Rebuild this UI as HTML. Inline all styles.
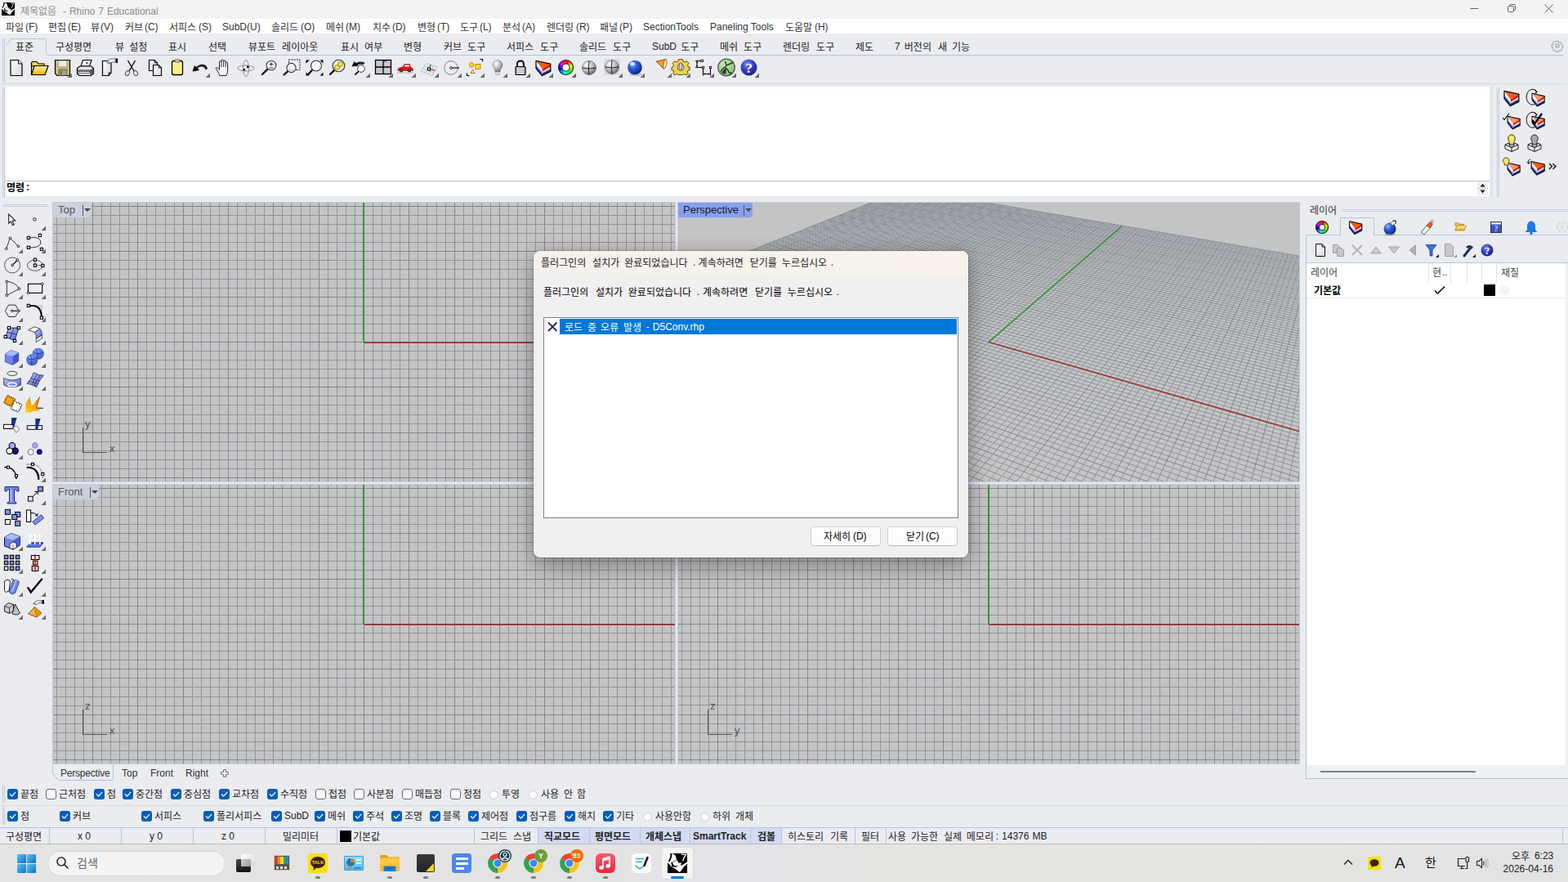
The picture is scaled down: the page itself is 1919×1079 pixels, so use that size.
<!DOCTYPE html>
<html lang="ko"><head><meta charset="utf-8"><title>Rhino 7</title><style>
html,body{margin:0;padding:0;overflow:hidden}
body{width:1919px;height:1079px;position:relative;overflow:hidden;background:#ebecf0;font-family:"Liberation Sans","Noto Sans CJK KR",sans-serif;font-size:12px;}
.t{position:absolute;white-space:nowrap;line-height:15px;font-size:12px;font-family:"Liberation Sans","Noto Sans CJK KR",sans-serif}
.a{position:absolute}
svg{display:block;overflow:visible}
</style></head>
<body>
<!-- chrome -->
<div style="position:absolute;left:0;top:0;width:1919px;height:23px;background:#f3f3f3"></div>
<svg style="position:absolute;left:2px;top:3px;overflow:hidden" width="16" height="16" viewBox="0 0 24 24"><rect width="24" height="24" rx=".6" fill="#000"/><path d="M0 0L7 .6L9.600 2.500L11 7.600L13.200 11L15.200 12L17.600 10.800L16.400 13L15.800 14.700L18 14.200L24 10.600V12.400L20 16.500L17.700 19.500L16.600 21.500L14.500 23L12 21L9 18.500L5.500 17L4 15.500L2 13L0 11.500Z" fill="#fff"/><path d="M4.300 .3Q4.800 3.500 3.400 6.500T1.700 9.400" fill="none" stroke="#000" stroke-width="1.900" stroke-linecap="round"/><path d="M4.600 11.800L11 8" fill="none" stroke="#000" stroke-width=".6"/><path d="M4.300 11.300L5.900 10.800L6.600 13L9.500 15.800L12.900 14L10.200 17.300L8 16.300L5.600 16.900Z" fill="#000"/><path d="M16.800 1.400H22.600Q19.500 5 18.700 9.500" fill="none" stroke="#fff" stroke-width="1.300"/></svg>
<svg style="position:absolute;left:25px;top:5.7px" width="169" height="15" fill="#8c8c8c" font-family="Liberation Sans, Noto Sans CJK KR, sans-serif" font-size="12" font-weight="normal"><text x="0.00" y="11.66">제목없음</text><text x="51.91" y="11.66">-</text><text x="59.90" y="11.66">Rhino</text><text x="95.25" y="11.66">7</text><text x="105.92" y="11.66">Educational</text></svg>
<svg style="position:absolute;left:1790px;top:0" width="129" height="23" viewBox="0 0 129 23" fill="none" stroke="#666" stroke-width="1"><path d="M9.5 10.5H19.5"/><rect x="55.500" y="7.500" width="7" height="7" rx="1.500"/><path d="M57.500 7.500V6.800Q57.500 5.500 58.800 5.500H63.200Q64.500 5.500 64.500 6.800V11.200Q64.500 12.500 63.200 12.500H62.500"/><path d="M100.500 5.500L110.500 15.500M110.500 5.500L100.500 15.500"/></svg>
<div style="position:absolute;left:0;top:23px;width:1919px;height:18px;background:#fff"></div>
<svg style="position:absolute;left:7px;top:26px" width="40" height="15" fill="#333" font-family="Liberation Sans, Noto Sans CJK KR, sans-serif" font-size="12" font-weight="normal"><text x="0.00" y="11.66">파일</text><text x="23.96" y="10.660">(F)</text></svg>
<svg style="position:absolute;left:59px;top:26px" width="40" height="15" fill="#333" font-family="Liberation Sans, Noto Sans CJK KR, sans-serif" font-size="12" font-weight="normal"><text x="0.00" y="11.66">편집</text><text x="23.96" y="10.660">(E)</text></svg>
<svg style="position:absolute;left:111px;top:26px" width="28" height="15" fill="#333" font-family="Liberation Sans, Noto Sans CJK KR, sans-serif" font-size="12" font-weight="normal"><text x="0.00" y="11.66">뷰</text><text x="11.98" y="10.660">(V)</text></svg>
<svg style="position:absolute;left:153px;top:26px" width="41" height="15" fill="#333" font-family="Liberation Sans, Noto Sans CJK KR, sans-serif" font-size="12" font-weight="normal"><text x="0.00" y="11.66">커브</text><text x="23.96" y="10.660">(C)</text></svg>
<svg style="position:absolute;left:207px;top:26px" width="52" height="15" fill="#333" font-family="Liberation Sans, Noto Sans CJK KR, sans-serif" font-size="12" font-weight="normal"><text x="0.00" y="11.66">서피스</text><text x="35.94" y="10.660">(S)</text></svg>
<div class="t" style="left:272px;top:26px;color:#333;">SubD(U)</div>
<svg style="position:absolute;left:332px;top:26px" width="54" height="15" fill="#333" font-family="Liberation Sans, Noto Sans CJK KR, sans-serif" font-size="12" font-weight="normal"><text x="0.00" y="11.66">솔리드</text><text x="35.94" y="10.660">(O)</text></svg>
<svg style="position:absolute;left:399px;top:26px" width="42" height="15" fill="#333" font-family="Liberation Sans, Noto Sans CJK KR, sans-serif" font-size="12" font-weight="normal"><text x="0.00" y="11.66">메쉬</text><text x="23.96" y="10.660">(M)</text></svg>
<svg style="position:absolute;left:456px;top:26px" width="41" height="15" fill="#333" font-family="Liberation Sans, Noto Sans CJK KR, sans-serif" font-size="12" font-weight="normal"><text x="0.00" y="11.66">치수</text><text x="23.96" y="10.660">(D)</text></svg>
<svg style="position:absolute;left:511px;top:26px" width="40" height="15" fill="#333" font-family="Liberation Sans, Noto Sans CJK KR, sans-serif" font-size="12" font-weight="normal"><text x="0.00" y="11.66">변형</text><text x="23.96" y="10.660">(T)</text></svg>
<svg style="position:absolute;left:563px;top:26px" width="39" height="15" fill="#333" font-family="Liberation Sans, Noto Sans CJK KR, sans-serif" font-size="12" font-weight="normal"><text x="0.00" y="11.66">도구</text><text x="23.96" y="10.660">(L)</text></svg>
<svg style="position:absolute;left:615px;top:26px" width="40" height="15" fill="#333" font-family="Liberation Sans, Noto Sans CJK KR, sans-serif" font-size="12" font-weight="normal"><text x="0.00" y="11.66">분석</text><text x="23.96" y="10.660">(A)</text></svg>
<svg style="position:absolute;left:669px;top:26px" width="53" height="15" fill="#333" font-family="Liberation Sans, Noto Sans CJK KR, sans-serif" font-size="12" font-weight="normal"><text x="0.00" y="11.66">렌더링</text><text x="35.94" y="10.660">(R)</text></svg>
<svg style="position:absolute;left:734px;top:26px" width="40" height="15" fill="#333" font-family="Liberation Sans, Noto Sans CJK KR, sans-serif" font-size="12" font-weight="normal"><text x="0.00" y="11.66">패널</text><text x="23.96" y="10.660">(P)</text></svg>
<div class="t" style="left:787px;top:26px;color:#333;">SectionTools</div>
<div class="t" style="left:869px;top:26px;color:#333;">Paneling Tools</div>
<svg style="position:absolute;left:961px;top:26px" width="53" height="15" fill="#333" font-family="Liberation Sans, Noto Sans CJK KR, sans-serif" font-size="12" font-weight="normal"><text x="0.00" y="11.66">도움말</text><text x="35.94" y="10.660">(H)</text></svg>
<div style="position:absolute;left:3px;top:47px;width:1px;height:54px;background:#c3cae0"></div><div style="position:absolute;left:5px;top:47px;width:1px;height:54px;background:#c3cae0"></div>
<svg style="position:absolute;left:0;top:44px" width="1919" height="26" viewBox="0 44 1919 26" fill="none" stroke="#b7c2dd" stroke-width="1"><path d="M7.500 55.500L13.500 47.500H53.500Q56.500 47.500 56.500 50.500V65.500Q56.500 67.500 58.500 67.500H1914"/></svg>
<svg style="position:absolute;left:19px;top:50px" width="24" height="15" fill="#222" font-family="Liberation Sans, Noto Sans CJK KR, sans-serif" font-size="12" font-weight="normal"><text x="0.00" y="11.66">표준</text></svg>
<svg style="position:absolute;left:68px;top:50px" width="48" height="15" fill="#222" font-family="Liberation Sans, Noto Sans CJK KR, sans-serif" font-size="12" font-weight="normal"><text x="0.00" y="11.66">구성평면</text></svg>
<svg style="position:absolute;left:141px;top:50px" width="42" height="15" fill="#222" font-family="Liberation Sans, Noto Sans CJK KR, sans-serif" font-size="12" font-weight="normal"><text x="0.00" y="11.66">뷰</text><text x="17.14" y="11.66">설정</text></svg>
<svg style="position:absolute;left:206px;top:50px" width="24" height="15" fill="#222" font-family="Liberation Sans, Noto Sans CJK KR, sans-serif" font-size="12" font-weight="normal"><text x="0.00" y="11.66">표시</text></svg>
<svg style="position:absolute;left:255px;top:50px" width="24" height="15" fill="#222" font-family="Liberation Sans, Noto Sans CJK KR, sans-serif" font-size="12" font-weight="normal"><text x="0.00" y="11.66">선택</text></svg>
<svg style="position:absolute;left:304px;top:50px" width="90" height="15" fill="#222" font-family="Liberation Sans, Noto Sans CJK KR, sans-serif" font-size="12" font-weight="normal"><text x="0.00" y="11.66">뷰포트</text><text x="41.10" y="11.66">레이아웃</text></svg>
<svg style="position:absolute;left:417px;top:50px" width="54" height="15" fill="#222" font-family="Liberation Sans, Noto Sans CJK KR, sans-serif" font-size="12" font-weight="normal"><text x="0.00" y="11.66">표시</text><text x="29.12" y="11.66">여부</text></svg>
<svg style="position:absolute;left:494px;top:50px" width="24" height="15" fill="#222" font-family="Liberation Sans, Noto Sans CJK KR, sans-serif" font-size="12" font-weight="normal"><text x="0.00" y="11.66">변형</text></svg>
<svg style="position:absolute;left:543px;top:50px" width="54" height="15" fill="#222" font-family="Liberation Sans, Noto Sans CJK KR, sans-serif" font-size="12" font-weight="normal"><text x="0.00" y="11.66">커브</text><text x="29.12" y="11.66">도구</text></svg>
<svg style="position:absolute;left:620px;top:50px" width="66" height="15" fill="#222" font-family="Liberation Sans, Noto Sans CJK KR, sans-serif" font-size="12" font-weight="normal"><text x="0.00" y="11.66">서피스</text><text x="41.10" y="11.66">도구</text></svg>
<svg style="position:absolute;left:709px;top:50px" width="66" height="15" fill="#222" font-family="Liberation Sans, Noto Sans CJK KR, sans-serif" font-size="12" font-weight="normal"><text x="0.00" y="11.66">솔리드</text><text x="41.10" y="11.66">도구</text></svg>
<svg style="position:absolute;left:798px;top:50px" width="60" height="15" fill="#222" font-family="Liberation Sans, Noto Sans CJK KR, sans-serif" font-size="12" font-weight="normal"><text x="0.00" y="10.660">SubD</text><text x="35.18" y="11.66">도구</text></svg>
<svg style="position:absolute;left:881px;top:50px" width="54" height="15" fill="#222" font-family="Liberation Sans, Noto Sans CJK KR, sans-serif" font-size="12" font-weight="normal"><text x="0.00" y="11.66">메쉬</text><text x="29.12" y="11.66">도구</text></svg>
<svg style="position:absolute;left:958px;top:50px" width="66" height="15" fill="#222" font-family="Liberation Sans, Noto Sans CJK KR, sans-serif" font-size="12" font-weight="normal"><text x="0.00" y="11.66">렌더링</text><text x="41.10" y="11.66">도구</text></svg>
<svg style="position:absolute;left:1047px;top:50px" width="24" height="15" fill="#222" font-family="Liberation Sans, Noto Sans CJK KR, sans-serif" font-size="12" font-weight="normal"><text x="0.00" y="11.66">제도</text></svg>
<svg style="position:absolute;left:1095px;top:50px" width="95" height="15" fill="#222" font-family="Liberation Sans, Noto Sans CJK KR, sans-serif" font-size="12" font-weight="normal"><text x="0.00" y="10.660">7</text><text x="11.83" y="11.66">버전의</text><text x="52.93" y="11.66">새</text><text x="70.07" y="11.66">기능</text></svg>
<svg style="position:absolute;left:1898px;top:48px" width="16" height="16" viewBox="0 0 16 16" fill="none" stroke="#8a8f99" stroke-width="1"><circle cx="8" cy="8" r="2.200"/><path d="M6.800 1.500h2.400l.4 1.800 1.300.6 1.600-1 1.700 1.700-1 1.600.6 1.300 1.800.4v2.400l-1.800.4-.6 1.300 1 1.600-1.700 1.700-1.600-1-1.300.6-.4 1.800H6.800l-.4-1.800-1.300-.6-1.600 1-1.700-1.700 1-1.600-.6-1.300-1.800-.4V6.800l1.800-.4.6-1.300-1-1.600 1.700-1.700 1.600 1 1.300-.6z" transform="translate(0.800 0.800) scale(0.900)"/></svg>
<div style="position:absolute;left:1px;top:102px;width:1917px;height:1px;background:#d3d8e8"></div>
<div style="position:absolute;left:3px;top:107px;width:1px;height:135px;background:#c3cae0"></div><div style="position:absolute;left:5px;top:107px;width:1px;height:135px;background:#c3cae0"></div>
<div style="position:absolute;left:7px;top:106px;width:1816px;height:134px;background:#fff"></div>
<div style="position:absolute;left:7px;top:221px;width:1816px;height:1px;background:#b9c1d6"></div>
<svg style="position:absolute;left:8px;top:222px" width="28" height="15" fill="#000" font-family="Liberation Sans, Noto Sans CJK KR, sans-serif" font-size="12" font-weight="bold"><text x="0.00" y="11.66">명령</text><text x="23.96" y="10.660">:</text></svg>
<div style="position:absolute;left:1808px;top:222px;width:13px;height:17px;background:#f0f0f0;border:0"></div>
<svg style="position:absolute;left:1808px;top:222px" width="13" height="17" viewBox="0 0 13 17"><path d="M3.500 6.500L6.500 2.800L9.500 6.500Z M3.500 10.500L6.500 14.200L9.500 10.500Z" fill="#111"/><path d="M0 8.500H13" stroke="#d0d0d0"/></svg>
<div style="position:absolute;left:1825px;top:105px;width:1px;height:137px;background:#d3d8e8"></div>
<div style="position:absolute;left:1832px;top:107px;width:1px;height:134px;background:#c3cae0"></div><div style="position:absolute;left:1834px;top:107px;width:1px;height:134px;background:#c3cae0"></div>
<svg style="position:absolute;left:1895px;top:199px" width="10" height="9" viewBox="0 0 10 9" fill="none" stroke="#111" stroke-width="1.300"><path d="M1 1L4.500 4.500L1 8M5.500 1L9 4.500L5.500 8"/></svg>
<div style="position:absolute;left:3px;top:250px;width:55px;height:1px;background:#c3cae0"></div><div style="position:absolute;left:3px;top:252px;width:55px;height:1px;background:#c3cae0"></div>
<!-- viewports -->
<div style="position:absolute;left:64px;top:247px;width:763px;height:343px;background:#c3cae0"></div>
<div style="position:absolute;left:829px;top:247px;width:762px;height:343px;background:#c3cae0"></div>
<div style="position:absolute;left:64px;top:592px;width:763px;height:343px;background:#c3cae0"></div>
<div style="position:absolute;left:829px;top:592px;width:762px;height:343px;background:#c3cae0"></div>
<svg style="position:absolute;left:65px;top:248px;overflow:hidden" width="761" height="341" viewBox="65 248 761 341" shape-rendering="crispEdges">
<rect x="65" y="248" width="761" height="341" fill="#c4c4c4"/>
<path d="M69.500 248V589M80.500 248V589M91.500 248V589M102.500 248V589M124.500 248V589M135.500 248V589M146.500 248V589M157.500 248V589M179.500 248V589M190.500 248V589M202.500 248V589M213.500 248V589M235.500 248V589M246.500 248V589M257.500 248V589M268.500 248V589M290.500 248V589M301.500 248V589M312.500 248V589M323.500 248V589M345.500 248V589M356.500 248V589M368.500 248V589M379.500 248V589M401.500 248V589M412.500 248V589M423.500 248V589M434.500 248V589M456.500 248V589M467.500 248V589M478.500 248V589M489.500 248V589M511.500 248V589M522.500 248V589M534.500 248V589M545.500 248V589M567.500 248V589M578.500 248V589M589.500 248V589M600.500 248V589M622.500 248V589M633.500 248V589M644.500 248V589M655.500 248V589M677.500 248V589M688.500 248V589M700.500 248V589M711.500 248V589M733.500 248V589M744.500 248V589M755.500 248V589M766.500 248V589M788.500 248V589M799.500 248V589M810.500 248V589M821.500 248V589M65 263.500H826M65 274.500H826M65 285.500H826M65 296.500H826M65 318.500H826M65 329.500H826M65 341.500H826M65 352.500H826M65 374.500H826M65 385.500H826M65 396.500H826M65 407.500H826M65 429.500H826M65 440.500H826M65 451.500H826M65 462.500H826M65 484.500H826M65 495.500H826M65 507.500H826M65 518.500H826M65 540.500H826M65 551.500H826M65 562.500H826M65 573.500H826" stroke="#8f959d" stroke-width="1" fill="none"/>
<path d="M113.500 248V589M168.500 248V589M224.500 248V589M279.500 248V589M334.500 248V589M390.500 248V589M445.500 248V589M500.500 248V589M556.500 248V589M611.500 248V589M666.500 248V589M722.500 248V589M777.500 248V589M65 252.500H826M65 307.500H826M65 363.500H826M65 418.500H826M65 473.500H826M65 529.500H826M65 584.500H826" stroke="#82878f" stroke-width="1" fill="none"/>
<rect x="444" y="248" width="2" height="171" fill="#3d923d"/>
<rect x="446" y="418" width="380" height="2" fill="#943b3b"/>
</svg>
<svg style="position:absolute;left:830px;top:248px;overflow:hidden" width="760" height="341" viewBox="830 248 760 341">
<rect x="830" y="248" width="760" height="341" fill="#c4c4c4"/>
<path d="M347.700 538.600L1111.700 231.600M357.0 530.700L2135.600 2081.400M351.0 541.500L1114.900 232.100M369.200 525.800L2120.100 2008.500M354.300 544.400L1118.100 232.700M381.300 521.0L2105.600 1940.500M357.600 547.400L1121.300 233.200M393.100 516.300L2092.100 1877.100M364.400 553.500L1127.800 234.300M416.100 507.100L2067.500 1761.700M367.900 556.600L1131.100 234.900M427.300 502.600L2056.400 1709.200M371.300 559.800L1134.400 235.400M438.300 498.300L2045.800 1659.800M374.900 562.900L1137.700 236.0M449.100 493.900L2035.900 1613.100M382.0 569.400L1144.300 237.100M470.200 485.500L2017.600 1527.200M385.700 572.600L1147.600 237.700M480.500 481.400L2009.200 1487.600M389.400 576.0L1151.0 238.300M490.600 477.400L2001.200 1449.900M393.100 579.300L1154.400 238.900M500.500 473.500L1993.600 1414.200M400.700 586.100L1161.200 240.0M519.900 465.700L1979.400 1347.700M404.600 589.600L1164.600 240.600M529.400 462.0L1972.800 1316.700M408.500 593.100L1168.0 241.200M538.700 458.200L1966.500 1287.200M412.400 596.700L1171.500 241.800M547.800 454.600L1960.500 1258.900M420.500 603.900L1178.500 243.0M565.700 447.500L1949.200 1205.900M424.600 607.600L1182.0 243.600M574.400 444.0L1943.900 1181.100M428.700 611.300L1185.500 244.200M583.0 440.600L1938.900 1157.200M432.900 615.100L1189.0 244.800M591.500 437.200L1934.0 1134.300M441.500 622.800L1196.200 246.0M608.100 430.600L1924.800 1091.100M445.900 626.700L1199.800 246.600M616.200 427.300L1920.500 1070.700M450.300 630.700L1203.400 247.200M624.100 424.200L1916.300 1051.100M454.800 634.700L1207.0 247.900M632.0 421.0L1912.200 1032.100M463.900 642.900L1214.300 249.100M647.400 414.900L1904.600 996.200M468.500 647.100L1218.0 249.700M654.900 411.900L1901.0 979.200M473.200 651.300L1221.700 250.400M662.300 409.0L1897.500 962.700M478.0 655.600L1225.400 251.0M669.600 406.0L1894.100 946.800M487.700 664.300L1232.900 252.300M683.900 400.300L1887.600 916.500M492.700 668.800L1236.700 252.900M690.900 397.500L1884.600 902.100M497.700 673.300L1240.500 253.600M697.800 394.800L1881.600 888.100M502.800 677.900L1244.300 254.200M704.600 392.100L1878.700 874.500M513.200 687.300L1252.0 255.500M718.0 386.700L1873.200 848.600M518.600 692.0L1255.900 256.200M724.500 384.100L1870.500 836.200M524.0 696.900L1259.800 256.900M731.0 381.600L1868.0 824.100M529.400 701.800L1263.700 257.500M737.400 379.0L1865.500 812.400M540.600 711.800L1271.600 258.900M749.800 374.100L1860.700 790.0M546.300 716.900L1275.600 259.600M756.0 371.600L1858.400 779.200M552.100 722.100L1279.600 260.300M762.0 369.200L1856.200 768.800M557.900 727.400L1283.600 260.900M768.0 366.800L1854.0 758.600M569.900 738.200L1291.700 262.300M779.700 362.200L1849.900 739.0M576.0 743.700L1295.800 263.0M785.400 359.900L1847.900 729.600M582.300 749.300L1299.900 263.700M791.100 357.600L1845.900 720.400M588.600 754.900L1304.100 264.400M796.700 355.400L1844.0 711.400M601.500 766.500L1312.400 265.900M807.700 351.0L1840.300 694.100M608.100 772.500L1316.600 266.600M813.100 348.800L1838.500 685.800M614.800 778.500L1320.800 267.300M818.400 346.700L1836.800 677.700M621.700 784.600L1325.0 268.0M823.700 344.600L1835.100 669.800M635.600 797.200L1333.600 269.500M834.0 340.500L1831.900 654.400M642.800 803.600L1337.900 270.200M839.100 338.500L1830.300 647.0M650.100 810.200L1342.200 271.0M844.100 336.500L1828.700 639.800M657.400 816.800L1346.600 271.700M849.100 334.500L1827.200 632.700M672.600 830.400L1355.400 273.200M858.800 330.600L1824.300 619.0M680.300 837.400L1359.800 274.0M863.600 328.700L1822.900 612.400M688.200 844.500L1364.300 274.700M868.300 326.800L1821.500 605.900M696.300 851.700L1368.700 275.500M873.0 324.900L1820.200 599.500M712.700 866.500L1377.800 277.0M882.200 321.300L1817.600 587.200M721.200 874.100L1382.300 277.800M886.800 319.500L1816.300 581.200M729.800 881.800L1386.900 278.600M891.200 317.700L1815.0 575.400M738.600 889.700L1391.500 279.400M895.700 315.900L1813.800 569.600M756.500 905.800L1400.800 281.0M904.400 312.400L1811.400 558.500M765.800 914.100L1405.500 281.800M908.700 310.700L1810.300 553.100M775.200 922.600L1410.200 282.600M912.900 309.0L1809.200 547.800M784.800 931.200L1414.900 283.400M917.100 307.400L1808.100 542.600M804.500 948.900L1424.500 285.0M925.300 304.100L1805.900 532.500M814.600 958.0L1429.300 285.800M929.400 302.500L1804.900 527.500M825.0 967.300L1434.200 286.700M933.400 300.900L1803.800 522.700M835.500 976.800L1439.0 287.500M937.400 299.300L1802.800 518.0M857.200 996.300L1448.900 289.200M945.200 296.200L1800.900 508.700M868.400 1006.300L1453.800 290.0M949.100 294.600L1799.900 504.200M879.800 1016.600L1458.800 290.900M952.900 293.100L1799.0 499.800M891.500 1027.0L1463.800 291.700M956.600 291.600L1798.0 495.500M915.500 1048.600L1474.0 293.500M964.100 288.600L1796.200 487.0M927.900 1059.800L1479.100 294.300M967.700 287.200L1795.400 482.900M940.600 1071.100L1484.200 295.200M971.400 285.700L1794.500 478.900M953.500 1082.800L1489.400 296.100M974.900 284.300L1793.600 474.900M980.200 1106.800L1499.800 297.900M982.0 281.500L1792.0 467.100M994.0 1119.200L1505.100 298.800M985.500 280.100L1791.200 463.300M1008.200 1131.900L1510.400 299.700M988.900 278.700L1790.400 459.600M1022.600 1144.800L1515.700 300.600M992.400 277.400L1789.600 455.900M1052.500 1171.700L1526.400 302.400M999.100 274.700L1788.100 448.700M1068.0 1185.600L1531.900 303.400M1002.400 273.400L1787.300 445.200M1083.900 1199.900L1537.300 304.300M1005.700 272.0L1786.600 441.800M1100.100 1214.500L1542.800 305.200M1008.900 270.700L1785.900 438.400M1133.800 1244.800L1553.900 307.100M1015.400 268.200L1784.500 431.700M1151.300 1260.500L1559.500 308.100M1018.500 266.900L1783.800 428.500M1169.300 1276.600L1565.100 309.0M1021.700 265.700L1783.100 425.300M1187.700 1293.100L1570.800 310.0M1024.800 264.400L1782.400 422.200M1225.900 1327.500L1582.200 312.0M1030.900 262.0L1781.100 416.0M1245.800 1345.400L1588.0 312.900M1033.900 260.800L1780.500 413.0M1266.300 1363.800L1593.800 313.900M1036.900 259.600L1779.800 410.0M1287.300 1382.700L1599.600 314.900M1039.900 258.400L1779.200 407.100M1331.100 1422.0L1611.400 316.900M1045.700 256.100L1778.0 401.400M1354.0 1442.600L1617.400 318.0M1048.600 254.900L1777.400 398.500M1377.500 1463.700L1623.400 319.0M1051.500 253.800L1776.800 395.800M1401.700 1485.500L1629.400 320.0M1054.300 252.700L1776.200 393.0M1452.400 1531.0L1641.600 322.100M1059.900 250.400L1775.100 387.700M1479.000 1554.800L1647.700 323.100M1062.700 249.300L1774.500 385.100M1506.300 1579.400L1653.900 324.200M1065.400 248.200L1774.000 382.500M1534.600 1604.800L1660.100 325.300M1068.100 247.200L1773.400 379.900M1593.800 1658.000L1672.700 327.400M1073.500 245.000L1772.400 374.900M1625.000 1686.000L1679.100 328.500M1076.100 244.000L1771.900 372.500M1657.200 1715.000L1685.500 329.600M1078.700 242.900L1771.300 370.100M1690.500 1744.900L1691.900 330.700M1081.300 241.900L1770.800 367.700M1760.800 1808.100L1704.900 332.900M1086.500 239.800L1769.800 363.000M1797.900 1841.400L1711.500 334.000M1089.000 238.800L1769.300 360.700M1836.400 1875.900L1718.100 335.200M1091.500 237.800L1768.900 358.400M1876.300 1911.800L1724.700 336.300M1094.000 236.800L1768.400 356.200M1961.000 1987.900L1738.200 338.600M1098.900 234.900L1767.400 351.800M2005.900 2028.200L1745.000 339.800M1101.400 233.900L1767.000 349.600M2052.700 2070.200L1751.800 340.900M1103.800 232.900L1766.500 347.500M2101.400 2114.000L1758.700 342.100M1106.200 232.000L1766.100 345.400" stroke="#8f959d" stroke-width="1" fill="none"/>
<path d="M344.500 535.700L1108.600 231.0M344.500 535.700L2152.200 2159.700M361.0 550.500L1124.600 233.800M404.700 511.700L2079.400 1817.600M378.400 566.100L1141.0 236.600M459.700 489.700L2026.500 1569.0M396.900 582.700L1157.800 239.400M510.300 469.600L1986.300 1380.100M416.400 600.300L1175.0 242.400M556.800 451.0L1954.800 1231.800M437.200 618.900L1192.600 245.400M599.900 433.800L1929.300 1112.300M459.300 638.800L1210.700 248.500M639.700 417.900L1908.400 1013.800M482.800 659.900L1229.200 251.600M676.800 403.200L1890.800 931.400M508.0 682.500L1248.200 254.900M711.400 389.400L1875.900 861.300M535.0 706.700L1267.700 258.200M743.600 376.500L1863.100 801.100M563.900 732.700L1287.700 261.600M773.900 364.500L1851.900 748.700M595.0 760.700L1308.200 265.100M802.200 353.200L1842.100 702.700M628.600 790.900L1329.300 268.700M828.900 342.500L1833.500 662.0M664.900 823.500L1351.0 272.500M854.0 332.500L1825.800 625.800M704.400 859.0L1373.300 276.300M877.700 323.100L1818.800 593.300M747.500 897.700L1396.200 280.200M900.0 314.200L1812.600 564.0M794.500 940.0L1419.700 284.200M921.200 305.700L1807.0 537.500M846.300 986.400L1443.900 288.300M941.300 297.700L1801.800 513.300M903.400 1037.700L1468.900 292.600M960.400 290.100L1797.100 491.200M966.700 1094.600L1494.600 297.0M978.500 282.900L1792.800 471.0M1037.400 1158.100L1521.0 301.500M995.700 276.0L1788.800 452.300M1116.800 1229.400L1548.300 306.200M1012.200 269.500L1785.200 435.0M1206.500 1310.100L1576.500 311.0M1027.800 263.200L1781.800 419.100M1308.900 1402.100L1605.500 315.900M1042.800 257.200L1778.600 404.200M1426.700 1507.900L1635.500 321.0M1057.100 251.500L1775.700 390.400M1563.700 1631.0L1666.400 326.300M1070.800 246.100L1772.900 377.400M1725.100 1775.900L1698.400 331.800M1083.900 240.900L1770.300 365.300M1917.800 1949.100L1731.400 337.400M1096.500 235.800L1767.900 354.0M2152.200 2159.700L1765.600 343.300M1108.600 231.0L1765.600 343.300" stroke="#82878f" stroke-width="1" fill="none"/>
<path d="M1210.0 418.500L1373.300 276.300" stroke="#3d923d" stroke-width="1.700" fill="none"/>
<path d="M1210.0 418.500L1818.800 593.300" stroke="#943b3b" stroke-width="1.700" fill="none"/>
</svg>
<svg style="position:absolute;left:65px;top:593px;overflow:hidden" width="761" height="341" viewBox="65 593 761 341" shape-rendering="crispEdges">
<rect x="65" y="593" width="761" height="341" fill="#c4c4c4"/>
<path d="M69.500 593V934M80.500 593V934M91.500 593V934M102.500 593V934M124.500 593V934M135.500 593V934M146.500 593V934M157.500 593V934M179.500 593V934M190.500 593V934M202.500 593V934M213.500 593V934M235.500 593V934M246.500 593V934M257.500 593V934M268.500 593V934M290.500 593V934M301.500 593V934M312.500 593V934M323.500 593V934M345.500 593V934M356.500 593V934M368.500 593V934M379.500 593V934M401.500 593V934M412.500 593V934M423.500 593V934M434.500 593V934M456.500 593V934M467.500 593V934M478.500 593V934M489.500 593V934M511.500 593V934M522.500 593V934M534.500 593V934M545.500 593V934M567.500 593V934M578.500 593V934M589.500 593V934M600.500 593V934M622.500 593V934M633.500 593V934M644.500 593V934M655.500 593V934M677.500 593V934M688.500 593V934M700.500 593V934M711.500 593V934M733.500 593V934M744.500 593V934M755.500 593V934M766.500 593V934M788.500 593V934M799.500 593V934M810.500 593V934M821.500 593V934M65 608.500H826M65 619.500H826M65 630.500H826M65 641.500H826M65 663.500H826M65 674.500H826M65 686.500H826M65 697.500H826M65 719.500H826M65 730.500H826M65 741.500H826M65 752.500H826M65 774.500H826M65 785.500H826M65 796.500H826M65 807.500H826M65 829.500H826M65 840.500H826M65 852.500H826M65 863.500H826M65 885.500H826M65 896.500H826M65 907.500H826M65 918.500H826" stroke="#8f959d" stroke-width="1" fill="none"/>
<path d="M113.500 593V934M168.500 593V934M224.500 593V934M279.500 593V934M334.500 593V934M390.500 593V934M445.500 593V934M500.500 593V934M556.500 593V934M611.500 593V934M666.500 593V934M722.500 593V934M777.500 593V934M65 597.500H826M65 652.500H826M65 708.500H826M65 763.500H826M65 818.500H826M65 874.500H826M65 929.500H826" stroke="#82878f" stroke-width="1" fill="none"/>
<rect x="444" y="593" width="2" height="171" fill="#3d923d"/>
<rect x="446" y="763" width="380" height="2" fill="#943b3b"/>
</svg>
<svg style="position:absolute;left:830px;top:593px;overflow:hidden" width="760" height="341" viewBox="830 593 760 341" shape-rendering="crispEdges">
<rect x="830" y="593" width="760" height="341" fill="#c4c4c4"/>
<path d="M834.500 593V934M845.500 593V934M856.500 593V934M867.500 593V934M889.500 593V934M900.500 593V934M911.500 593V934M922.500 593V934M944.500 593V934M955.500 593V934M966.500 593V934M977.500 593V934M1000.500 593V934M1011.500 593V934M1022.500 593V934M1033.500 593V934M1055.500 593V934M1066.500 593V934M1077.500 593V934M1088.500 593V934M1110.500 593V934M1121.500 593V934M1132.500 593V934M1143.500 593V934M1165.500 593V934M1176.500 593V934M1187.500 593V934M1198.500 593V934M1221.500 593V934M1232.500 593V934M1243.500 593V934M1254.500 593V934M1276.500 593V934M1287.500 593V934M1298.500 593V934M1309.500 593V934M1331.500 593V934M1342.500 593V934M1353.500 593V934M1364.500 593V934M1386.500 593V934M1397.500 593V934M1408.500 593V934M1419.500 593V934M1442.500 593V934M1453.500 593V934M1464.500 593V934M1475.500 593V934M1497.500 593V934M1508.500 593V934M1519.500 593V934M1530.500 593V934M1552.500 593V934M1563.500 593V934M1574.500 593V934M1585.500 593V934M830 608.500H1590M830 619.500H1590M830 630.500H1590M830 641.500H1590M830 664.500H1590M830 675.500H1590M830 686.500H1590M830 697.500H1590M830 719.500H1590M830 730.500H1590M830 741.500H1590M830 752.500H1590M830 774.500H1590M830 785.500H1590M830 796.500H1590M830 807.500H1590M830 829.500H1590M830 840.500H1590M830 851.500H1590M830 862.500H1590M830 885.500H1590M830 896.500H1590M830 907.500H1590M830 918.500H1590" stroke="#8f959d" stroke-width="1" fill="none"/>
<path d="M878.500 593V934M933.500 593V934M988.500 593V934M1044.500 593V934M1099.500 593V934M1154.500 593V934M1210.500 593V934M1265.500 593V934M1320.500 593V934M1375.500 593V934M1431.500 593V934M1486.500 593V934M1541.500 593V934M830 597.500H1590M830 652.500H1590M830 708.500H1590M830 763.500H1590M830 818.500H1590M830 874.500H1590M830 929.500H1590" stroke="#82878f" stroke-width="1" fill="none"/>
<rect x="1209" y="593" width="2" height="171" fill="#3d923d"/>
<rect x="1211" y="763" width="379" height="2" fill="#943b3b"/>
</svg>
<div style="position:absolute;left:65px;top:248px;width:47px;height:18px;background:rgba(205,210,222,0.95);clip-path:polygon(0 0,100% 0,100% 15px,44px 100%,0 100%)"></div><div class="t" style="left:71px;top:249px;color:#555;font-size:13px;">Top</div><div style="position:absolute;left:101px;top:251px;width:1px;height:13px;background:#555"></div><div style="position:absolute;left:103px;top:255px;width:0;height:0;border-left:4px solid transparent;border-right:4px solid transparent;border-top:4px solid #444"></div>
<div style="position:absolute;left:830px;top:248px;width:91px;height:18px;background:#87a0ec;clip-path:polygon(0 0,100% 0,100% 15px,88px 100%,0 100%)"></div><div class="t" style="left:836px;top:249px;color:#1a1a3a;font-size:13px;">Perspective</div><div style="position:absolute;left:910px;top:251px;width:1px;height:13px;background:#555"></div><div style="position:absolute;left:912px;top:255px;width:0;height:0;border-left:4px solid transparent;border-right:4px solid transparent;border-top:4px solid #444"></div>
<div style="position:absolute;left:65px;top:593px;width:56px;height:18px;background:rgba(205,210,222,0.95);clip-path:polygon(0 0,100% 0,100% 15px,53px 100%,0 100%)"></div><div class="t" style="left:71px;top:594px;color:#555;font-size:13px;">Front</div><div style="position:absolute;left:110px;top:596px;width:1px;height:13px;background:#555"></div><div style="position:absolute;left:112px;top:600px;width:0;height:0;border-left:4px solid transparent;border-right:4px solid transparent;border-top:4px solid #444"></div>
<div style="position:absolute;left:101px;top:523px;width:1px;height:31px;background:#555"></div><div style="position:absolute;left:101px;top:553px;width:30px;height:1px;background:#555"></div><div class="t" style="left:104px;top:511px;color:#555;font-size:13px">y</div><div class="t" style="left:134px;top:541px;color:#555;font-size:13px">x</div>
<div style="position:absolute;left:101px;top:868px;width:1px;height:31px;background:#555"></div><div style="position:absolute;left:101px;top:898px;width:30px;height:1px;background:#555"></div><div class="t" style="left:104px;top:856px;color:#555;font-size:13px">z</div><div class="t" style="left:134px;top:886px;color:#555;font-size:13px">x</div>
<div style="position:absolute;left:866px;top:868px;width:1px;height:31px;background:#555"></div><div style="position:absolute;left:866px;top:898px;width:30px;height:1px;background:#555"></div><div class="t" style="left:869px;top:856px;color:#555;font-size:13px">z</div><div class="t" style="left:899px;top:886px;color:#555;font-size:13px">y</div>
<!-- leftbar -->
<svg style="position:absolute;left:4px;top:258px" width="24" height="24" viewBox="0 0 24 24"><path d="M6.700 4V15.200L9.300 12.800L11.400 17.500L13.200 16.700L11.200 12.100L14.700 11.800Z" fill="#fff" stroke="#222" stroke-width="1.100"/></svg>
<svg style="position:absolute;left:32px;top:258px" width="24" height="24" viewBox="0 0 24 24"><circle cx="10.4" cy="10.4" r="1.8" fill="#fff" stroke="#000" stroke-width=".9"/><path d="M24 18.500V24H18.500Z" fill="#6a6a6a"/></svg>
<svg style="position:absolute;left:4px;top:286px" width="24" height="24" viewBox="0 0 24 24"><path d="M3.600 18.400L8.400 5.300L18.400 15.300" fill="none" stroke="#222" stroke-width=".9"/><circle cx="3.6" cy="18.4" r="1.3" fill="#fff" stroke="#000" stroke-width=".9"/><circle cx="8.4" cy="5.3" r="1.3" fill="#fff" stroke="#000" stroke-width=".9"/><circle cx="18.4" cy="15.3" r="1.3" fill="#fff" stroke="#000" stroke-width=".9"/><path d="M24 18.500V24H18.500Z" fill="#6a6a6a"/></svg>
<svg style="position:absolute;left:32px;top:286px" width="24" height="24" viewBox="0 0 24 24"><path d="M2.900 5Q10 3.500 15 5.500Q19 8.500 17.500 12.500Q15 17.500 2.900 16.800" fill="none" stroke="#222" stroke-width=".9"/><rect x="1.30" y="3.40" width="3.2" height="3.2" fill="#fff" stroke="#000" stroke-width="1.1"/><rect x="15.30" y="0.30" width="3.2" height="3.2" fill="#fff" stroke="#000" stroke-width="1.1"/><rect x="1.30" y="15.20" width="3.2" height="3.2" fill="#fff" stroke="#000" stroke-width="1.1"/><rect x="17.30" y="17.30" width="3.2" height="3.2" fill="#fff" stroke="#000" stroke-width="1.1"/><path d="M24 18.500V24H18.500Z" fill="#6a6a6a"/></svg>
<svg style="position:absolute;left:4px;top:314px" width="24" height="24" viewBox="0 0 24 24"><circle cx="11.100" cy="10.400" r="9.500" fill="none" stroke="#444" stroke-width=".9"/><path d="M11.100 10.400L17.300 4.300" stroke="#000" stroke-width="1.200"/><circle cx="11.1" cy="10.4" r="1.3" fill="#fff" stroke="#000" stroke-width=".9"/><circle cx="17.3" cy="4.3" r="1.3" fill="#fff" stroke="#000" stroke-width=".9"/><path d="M24 18.500V24H18.500Z" fill="#6a6a6a"/></svg>
<svg style="position:absolute;left:32px;top:314px" width="24" height="24" viewBox="0 0 24 24"><ellipse cx="10.900" cy="10.700" rx="9.500" ry="6.600" fill="none" stroke="#444" stroke-width=".9"/><path d="M10.900 3.700V10.700H20.300" fill="none" stroke="#444" stroke-width=".8"/><rect x="9.30" y="9.10" width="3.2" height="3.2" fill="#fff" stroke="#000" stroke-width="1.1"/><rect x="9.30" y="2.10" width="3.2" height="3.2" fill="#fff" stroke="#000" stroke-width="1.1"/><rect x="18.70" y="9.30" width="3.2" height="3.2" fill="#fff" stroke="#000" stroke-width="1.1"/><path d="M24 18.500V24H18.500Z" fill="#6a6a6a"/></svg>
<svg style="position:absolute;left:4px;top:342px" width="24" height="24" viewBox="0 0 24 24"><path d="M4.300 2.300Q15 3 19.500 11.300L4.300 19.300Z" fill="none" stroke="#222" stroke-width=".9"/><circle cx="4.3" cy="2.3" r="1.3" fill="#fff" stroke="#000" stroke-width=".9"/><circle cx="4.3" cy="19.3" r="1.3" fill="#fff" stroke="#000" stroke-width=".9"/><circle cx="19.5" cy="11.3" r="1.3" fill="#fff" stroke="#000" stroke-width=".9"/><path d="M24 18.500V24H18.500Z" fill="#6a6a6a"/></svg>
<svg style="position:absolute;left:32px;top:342px" width="24" height="24" viewBox="0 0 24 24"><rect x="2.400" y="5.300" width="17.300" height="11.100" fill="none" stroke="#000" stroke-width="1.100"/><circle cx="19.7" cy="5.3" r="1.3" fill="#fff" stroke="#000" stroke-width=".9"/><circle cx="2.4" cy="16.4" r="1.3" fill="#fff" stroke="#000" stroke-width=".9"/><path d="M24 18.500V24H18.500Z" fill="#6a6a6a"/></svg>
<svg style="position:absolute;left:4px;top:370px" width="24" height="24" viewBox="0 0 24 24"><path d="M2.400 10.300L6.600 3.100H14.900L19 10.300L14.900 17.500H6.600Z" fill="none" stroke="#222" stroke-width=".9"/><path d="M10.700 10.300H19" stroke="#000" stroke-width="1.100"/><circle cx="10.7" cy="10.3" r="1.3" fill="#fff" stroke="#000" stroke-width=".9"/><circle cx="19" cy="10.3" r="1.3" fill="#fff" stroke="#000" stroke-width=".9"/><path d="M24 18.500V24H18.500Z" fill="#6a6a6a"/></svg>
<svg style="position:absolute;left:32px;top:370px" width="24" height="24" viewBox="0 0 24 24"><path d="M2.900 3.900H18.900V18.700" fill="none" stroke="#999" stroke-width=".8"/><path d="M2.900 3.900H8Q18.900 4.500 18.900 18.700" fill="none" stroke="#000" stroke-width="2"/><rect x="1.30" y="2.30" width="3.2" height="3.2" fill="#fff" stroke="#000" stroke-width="1.1"/><rect x="17.30" y="17.10" width="3.2" height="3.2" fill="#fff" stroke="#000" stroke-width="1.1"/><path d="M24 18.500V24H18.500Z" fill="#6a6a6a"/></svg>
<svg style="position:absolute;left:4px;top:398px" width="24" height="24" viewBox="0 0 24 24"><path d="M6.900 3.100L18.900 3.100L14 18.900L2.700 14Z" fill="url(#gPrim)" stroke="#223" stroke-width=".9"/><path d="M12.900 3.100L8.300 16.400M4.800 8.500L16.400 11" stroke="#223" stroke-width=".8" fill="none"/><rect x="5.30" y="1.50" width="3.2" height="3.2" fill="#fff" stroke="#000" stroke-width="1.1"/><rect x="17.30" y="1.50" width="3.2" height="3.2" fill="#fff" stroke="#000" stroke-width="1.1"/><rect x="1.10" y="12.40" width="3.2" height="3.2" fill="#fff" stroke="#000" stroke-width="1.1"/><rect x="12.40" y="17.30" width="3.2" height="3.2" fill="#fff" stroke="#000" stroke-width="1.1"/><path d="M24 18.500V24H18.500Z" fill="#6a6a6a"/></svg>
<svg style="position:absolute;left:32px;top:398px" width="24" height="24" viewBox="0 0 24 24"><path d="M2.700 5.700L10 1.700L17.100 4.400L10.400 8.400Z" fill="#fff" stroke="#222" stroke-width=".8"/><path d="M10.400 8.400L17.100 4.400Q20 8 19.300 12L12.300 16.500Q13 11.500 10.400 8.400Z" fill="url(#gPrim)" stroke="#222" stroke-width=".8"/><path d="M12.300 16.500L19.300 12V16L12.300 20.500Z" fill="#fff" stroke="#222" stroke-width=".8"/><path d="M24 18.500V24H18.500Z" fill="#6a6a6a"/></svg>
<svg style="position:absolute;left:4px;top:426px" width="24" height="24" viewBox="0 0 24 24"><path d="M2.400 7.300L9.300 2.300L18.700 5.700V15.600L11.700 20.400L2.400 16.700Z" fill="#6f86f0" stroke="#223" stroke-width=".6"/><path d="M2.400 7.300L9.300 2.300L18.700 5.700L11.700 10Z" fill="#a8b8ff"/><path d="M11.700 10L18.700 5.700V15.600L11.700 20.400Z" fill="#3f55d0"/><path d="M24 18.500V24H18.500Z" fill="#6a6a6a"/></svg>
<svg style="position:absolute;left:32px;top:426px" width="24" height="24" viewBox="0 0 24 24"><circle cx="7.300" cy="14.300" r="7" fill="url(#gBlue)"/><circle cx="14.700" cy="6.700" r="7" fill="url(#gBlue)"/><circle cx="7.300" cy="14.300" r="7" fill="#8ea4ff" opacity=".45"/><circle cx="14.700" cy="6.700" r="7" fill="#8ea4ff" opacity=".45"/><path d="M1 12Q7 16 13.500 11M5 8Q8 14 6.500 21M8.500 4Q14 9 21 5M12 0.500Q15 6 14 13.500" fill="none" stroke="#1a2a80" stroke-width=".8"/><path d="M24 18.500V24H18.500Z" fill="#6a6a6a"/></svg>
<svg style="position:absolute;left:4px;top:454px" width="24" height="24" viewBox="0 0 24 24"><ellipse cx="10.900" cy="2.900" rx="6" ry="2.600" fill="none" stroke="#333" stroke-width=".9"/><path d="M.7 8.700Q11 13.500 21.300 8.700V17Q11 22 .7 17Z" fill="url(#gPrim)" stroke="#223" stroke-width=".8"/><ellipse cx="10.900" cy="16.400" rx="5.300" ry="2.200" fill="none" stroke="#fff" stroke-width="1.500"/><path d="M24 18.500V24H18.500Z" fill="#6a6a6a"/></svg>
<svg style="position:absolute;left:32px;top:454px" width="24" height="24" viewBox="0 0 24 24"><path d="M9.300 1.700Q15 5.500 21.300 5.300Q15 12 12.700 19.600Q7 15.500 1.100 15.300Q7 9 9.300 1.700Z" fill="url(#gPrim)" stroke="#223" stroke-width=".8"/><path d="M5.500 8.500Q11 11 17 12M13.300 3.800Q9.500 10 7 17.500M17.300 5Q13 11 10 18.500M3 12Q9 13.500 15 16" fill="none" stroke="#223" stroke-width=".7"/><path d="M24 18.500V24H18.500Z" fill="#6a6a6a"/></svg>
<svg style="position:absolute;left:4px;top:482px" width="24" height="24" viewBox="0 0 24 24"><path d="M3 4.500H5.500Q4.500 1.500 7.300 1.500Q10 1.500 9 4.500H11.500V7Q14.500 6 14.500 8.500Q14.500 11 11.500 10V12.500H9Q10 15 7.300 15Q4.500 15 5.500 12.500H3V10Q.5 11 .5 8.500Q.5 6 3 7Z" fill="#f7a500" stroke="#6b3e00" stroke-width=".8" transform="rotate(-20 7.300 8)"/><path d="M11.500 11.500H14Q13 8.500 16 8.500Q18.700 8.500 17.700 11.500H20.500V14Q23 13 23 15.500Q23 18 20.500 17V19.500H18Q19 22 16 22Q13.300 22 14.300 19.500H11.500V17Q9 18 9 15.500Q9 13 11.500 14Z" fill="#fff" stroke="#444" stroke-width=".8" transform="rotate(-20 16 15.300)"/></svg>
<svg style="position:absolute;left:32px;top:482px" width="24" height="24" viewBox="0 0 24 24"><defs><linearGradient id="gEx" x1="0" y1="1" x2="1" y2="0"><stop offset="0" stop-color="#ffd200"/><stop offset="1" stop-color="#f26a00"/></linearGradient></defs><path d="M-.7 22.500V12L4.500 3.500L6.700 15.300L16.500 3.300L12.600 16.700L21 17.300L12.500 19L17.500 21L9 20.500L6 22.500Z" fill="url(#gEx)"/><path d="M16.500 3.300L12.600 16.700L21 17.300L13 18.200" fill="none" stroke="#2a1400" stroke-width=".6"/></svg>
<svg style="position:absolute;left:4px;top:510px" width="24" height="24" viewBox="0 0 24 24"><path d="M10 1H16.700L12.700 14H10Z" fill="#1c2f8c"/><rect x=".6" y="9.300" width="11.400" height="5.200" fill="#fff" stroke="#000" stroke-width="1"/><path d="M12 13.300L16 10.700L20 15.300L15.700 19.300Z" fill="#fff" stroke="#555" stroke-width=".8"/></svg>
<svg style="position:absolute;left:32px;top:510px" width="24" height="24" viewBox="0 0 24 24"><rect x="1.300" y="10.700" width="18.200" height="4.600" fill="#fff" stroke="#000" stroke-width="1"/><path d="M11.300 2H17.600L14 15.800H11.300Z" fill="#1c2f8c"/></svg>
<svg style="position:absolute;left:4px;top:538px" width="24" height="24" viewBox="0 0 24 24"><circle cx="10.900" cy="7.300" r="4.300" fill="#000"/><circle cx="7.700" cy="13.600" r="4.300" fill="#000"/><circle cx="14.700" cy="13.600" r="4.300" fill="#000"/><circle cx="10.900" cy="7.300" r="3.200" fill="#a9a3f5"/><circle cx="7.700" cy="13.600" r="3.200" fill="#fff"/><circle cx="14.700" cy="13.600" r="3.200" fill="#16127a"/><path d="M24 18.500V24H18.500Z" fill="#6a6a6a"/></svg>
<svg style="position:absolute;left:32px;top:538px" width="24" height="24" viewBox="0 0 24 24"><circle cx="10.900" cy="6.900" r="3.500" fill="#a9a3f5" stroke="#665fc0" stroke-width=".5"/><circle cx="5.700" cy="15" r="3.500" fill="#fff" stroke="#333" stroke-width=".7"/><circle cx="16.300" cy="14.700" r="3.500" fill="#16127a"/></svg>
<svg style="position:absolute;left:4px;top:566px" width="24" height="24" viewBox="0 0 24 24"><path d="M1.300 5.600Q8 5 12 9Q16 13 16 20" fill="none" stroke="#000" stroke-width="1.300"/><rect x="4.50" y="4.10" width="3" height="3" fill="#fff" stroke="#000" stroke-width="1.1"/><rect x="14.50" y="14.50" width="3" height="3" fill="#fff" stroke="#000" stroke-width="1.1"/></svg>
<svg style="position:absolute;left:32px;top:566px" width="24" height="24" viewBox="0 0 24 24"><path d="M.7 6Q8 5 12 10Q15.500 14.500 15.300 20.700" fill="none" stroke="#000" stroke-width="2.200"/><path d="M.7 2H8Q14 3 17 7Q20.500 12 20.300 20" fill="none" stroke="#000" stroke-width="1" stroke-dasharray="1 1.200"/><rect x="6.50" y="0.40" width="3" height="3" fill="#fff" stroke="#000" stroke-width="1.1"/><rect x="18.80" y="12.50" width="3" height="3" fill="#fff" stroke="#000" stroke-width="1.1"/><path d="M24 18.500V24H18.500Z" fill="#6a6a6a"/></svg>
<svg style="position:absolute;left:4px;top:594px" width="24" height="24" viewBox="0 0 24 24"><path d="M2 1.500H18.700L19 7H17Q16 4.500 13.500 4.500V19Q13.500 20.500 16 20.800V22H5V20.800Q7.500 20.500 7.500 19V4.500Q5 4.500 4 7H2Z" fill="#6f86f0" stroke="#1a2a80" stroke-width="1"/><path d="M9.500 4.500V20" stroke="#b8c6ff" stroke-width="1.600"/></svg>
<svg style="position:absolute;left:32px;top:594px" width="24" height="24" viewBox="0 0 24 24"><rect x="2.400" y="13.300" width="5.800" height="5.800" fill="#e4e4e4" stroke="#000" stroke-width="1"/><rect x="14.700" y="1.300" width="5.800" height="5.800" fill="#7b90f5" stroke="#000" stroke-width="1"/><path d="M8.500 13L13.700 8M10.500 7.500H14V11" fill="none" stroke="#000" stroke-width="1"/><path d="M24 18.500V24H18.500Z" fill="#6a6a6a"/></svg>
<svg style="position:absolute;left:4px;top:622px" width="24" height="24" viewBox="0 0 24 24"><rect x="2.4" y="1.3" width="6" height="6" fill="#7b90f5" stroke="#000" stroke-width="1"/><rect x="14.7" y="4.4" width="6" height="6" fill="#7b90f5" stroke="#000" stroke-width="1"/><rect x="10.7" y="7.5" width="6" height="6" fill="#7b90f5" stroke="#000" stroke-width="1"/><rect x="2.4" y="13.5" width="6" height="6" fill="#eee" stroke="#000" stroke-width="1"/><rect x="14.7" y="15.3" width="6" height="6" fill="#7b90f5" stroke="#000" stroke-width="1"/></svg>
<svg style="position:absolute;left:32px;top:622px" width="24" height="24" viewBox="0 0 24 24"><rect x=".5" y="2" width="5.200" height="14.500" fill="#fff" stroke="#000" stroke-width="1"/><rect x="8" y="11.500" width="13.500" height="5" fill="#7b90f5" stroke="#1a2a80" stroke-width=".8" transform="rotate(-38 14.700 14)"/><path d="M6 5.500Q11 5 13.500 8.500M11 8.800L13.800 9L14 6" fill="none" stroke="#000" stroke-width="1"/></svg>
<svg style="position:absolute;left:4px;top:650px" width="24" height="24" viewBox="0 0 24 24"><path d="M1.500 7.500L9.500 2.500L20.500 6.500V17L12 22L1.500 18Z" fill="#6f86f0" stroke="#111" stroke-width="1"/><path d="M1.500 7.500L9.500 2.500L20.500 6.500L12 11Z" fill="#a8b8ff"/><path d="M12 11L20.500 6.500V17L12 22Z" fill="#4a60d8"/><path d="M8 15L12 13L16 14.500V20L12 22L8 20.500Z" fill="#fff" stroke="#111" stroke-width=".8"/><path d="M12 16.500V22" stroke="#111" stroke-width=".7"/><path d="M24 18.500V24H18.500Z" fill="#6a6a6a"/></svg>
<svg style="position:absolute;left:32px;top:650px" width="24" height="24" viewBox="0 0 24 24"><path d="M.7 19.300L5 14H21L17 19.300Z" fill="#5a74ec" stroke="#1a2a80" stroke-width=".8"/><path d="M4 14H21" stroke="#000" stroke-width="1" stroke-dasharray="2 1.500"/><path d="M5 16V5M10.800 16V5M16.700 16V5" stroke="#fff" stroke-width="1.800"/><path d="M2.800 6.500L5 2.500L7.200 6.500ZM8.600 6.500L10.800 2.500L13 6.500ZM14.500 6.500L16.700 2.500L18.900 6.500Z" fill="#fff"/><path d="M24 18.500V24H18.500Z" fill="#6a6a6a"/></svg>
<svg style="position:absolute;left:4px;top:678px" width="24" height="24" viewBox="0 0 24 24"><rect x="1.4" y="1.2999999999999998" width="4.400" height="4.400" fill="#7b90f5" stroke="#000" stroke-width="1.100"/><rect x="8.3" y="1.2999999999999998" width="4.400" height="4.400" fill="#7b90f5" stroke="#000" stroke-width="1.100"/><rect x="15.400000000000002" y="1.2999999999999998" width="4.400" height="4.400" fill="#7b90f5" stroke="#000" stroke-width="1.100"/><rect x="1.4" y="8.3" width="4.400" height="4.400" fill="#7b90f5" stroke="#000" stroke-width="1.100"/><rect x="8.3" y="8.3" width="4.400" height="4.400" fill="#7b90f5" stroke="#000" stroke-width="1.100"/><rect x="15.400000000000002" y="8.3" width="4.400" height="4.400" fill="#7b90f5" stroke="#000" stroke-width="1.100"/><rect x="1.4" y="15.2" width="4.400" height="4.400" fill="#fff" stroke="#000" stroke-width="1.100"/><rect x="8.3" y="15.2" width="4.400" height="4.400" fill="#7b90f5" stroke="#000" stroke-width="1.100"/><rect x="15.400000000000002" y="15.2" width="4.400" height="4.400" fill="#7b90f5" stroke="#000" stroke-width="1.100"/><path d="M24 18.500V24H18.500Z" fill="#6a6a6a"/></svg>
<svg style="position:absolute;left:32px;top:678px" width="24" height="24" viewBox="0 0 24 24"><rect x="6.300" y="1.600" width="9.600" height="4.900" fill="#f4f4f4" stroke="#000" stroke-width="1.100"/><rect x="8.500" y="8.200" width="5.400" height="4.500" fill="#f4f4f4" stroke="#000" stroke-width="1.100"/><rect x="7.200" y="14.500" width="7.600" height="5.900" fill="#f4f4f4" stroke="#000" stroke-width="1.100"/><path d="M11 .2V21.600" stroke="#d01818" stroke-width="1.600"/><path d="M24 18.500V24H18.500Z" fill="#6a6a6a"/></svg>
<svg style="position:absolute;left:4px;top:706px" width="24" height="24" viewBox="0 0 24 24"><path d="M1.500 5L5 3L8.500 4.500L7 17L3 18.500L1.500 16.500Z" fill="#f2f2f2" stroke="#111" stroke-width=".9"/><path d="M9.500 2L13 3.500" stroke="#111" stroke-width=".9"/><path d="M11.500 5L16 3L19.500 6L14.500 19.500L10.500 21L7 18Z" fill="#6f86f0" stroke="#1a2a80" stroke-width=".8"/><path d="M16 3L11 17.500" stroke="#a8b8ff" stroke-width="2"/><path d="M24 18.500V24H18.500Z" fill="#6a6a6a"/></svg>
<svg style="position:absolute;left:32px;top:706px" width="24" height="24" viewBox="0 0 24 24"><path d="M1.800 12.300L5.800 18.500L19.600 2" fill="none" stroke="#000" stroke-width="2.400" stroke-linejoin="miter"/><path d="M24 18.500V24H18.500Z" fill="#6a6a6a"/></svg>
<svg style="position:absolute;left:4px;top:734px" width="24" height="24" viewBox="0 0 24 24"><path d="M1.500 7.500L6.500 3.500L12.500 5.500V13L7.500 16.500L1.500 14Z" fill="#c9c9c9" stroke="#111" stroke-width=".9"/><path d="M1.500 7.500L7.500 9.500L12.500 5.500M7.500 9.500V16.500" fill="none" stroke="#111" stroke-width=".7"/><path d="M14.500 5L20.500 16Q17.500 19.500 11 17Z" fill="#bdbdbd" stroke="#111" stroke-width=".9"/><path d="M24 18.500V24H18.500Z" fill="#6a6a6a"/></svg>
<svg style="position:absolute;left:32px;top:734px" width="24" height="24" viewBox="0 0 24 24"><path d="M10.500 8.500L19 16L13 21L2.500 17Z" fill="#f7b441" stroke="#5a3500" stroke-width=".8"/><path d="M10.500 8.500L13 21" stroke="#5a3500" stroke-width=".7"/><path d="M10.500 8.500L19 16L13 21Z" fill="#e8920a"/><path d="M9 4L13.500 .8H19V3.500H15L12.500 6Z" fill="#fff" stroke="#333" stroke-width=".7"/><rect x="19.500" y="0" width="2.500" height="5" fill="#000"/><path d="M8 5L12 2M9.500 6L13 3.500" stroke="#666" stroke-width=".6"/><path d="M24 18.500V24H18.500Z" fill="#6a6a6a"/></svg>
<!-- toolbar -->
<svg style="position:absolute;left:8px;top:71px" width="24" height="24" viewBox="0 0 24 24"><path d="M5 2.500H14.500L19 7V21.500H5Z" fill="url(#gPaper)" stroke="#000" stroke-width="1.200"/><path d="M14.500 2.500V7H19" fill="#fff" stroke="#000" stroke-width="1"/></svg>
<svg style="position:absolute;left:36px;top:71px" width="24" height="24" viewBox="0 0 24 24"><path d="M2.500 6Q2.500 4.500 4 4.500H9L11 7H18V10H2.500Z" fill="#f5d24a" stroke="#000" stroke-width="1.100"/><path d="M2.500 20.500L6 9.500H23L19 20.500Z" fill="url(#gFold)" stroke="#000" stroke-width="1.200"/><path d="M2.500 6V20.500" stroke="#000" stroke-width="1.200"/></svg>
<svg style="position:absolute;left:64px;top:71px" width="24" height="24" viewBox="0 0 24 24"><path d="M3.500 2.500H21.500V21.500H6L3.500 19Z" fill="#d4c36a" stroke="#000" stroke-width="1.200"/><rect x="7" y="3" width="11" height="8" fill="#e8e8e8" stroke="#666" stroke-width=".6"/><rect x="8" y="14" width="10" height="7.500" fill="#9aa0a8" stroke="#333" stroke-width=".6"/><rect x="9.500" y="15.500" width="2.500" height="5" fill="#8a7a28"/><path d="M24 18.500V24H18.500Z" fill="#6a6a6a"/></svg>
<svg style="position:absolute;left:92px;top:71px" width="24" height="24" viewBox="0 0 24 24"><path d="M7 10L9.500 2.500H20L17.500 10Z" fill="#f4f4f4" stroke="#000" stroke-width="1.100"/><rect x="13" y="5" width="3" height="2.500" fill="#888"/><path d="M2.500 12.500L6 10H19.500L22.500 12.500V19L19.500 21.500H5L2.500 19Z" fill="#e8e8e8" stroke="#000" stroke-width="1.200"/><path d="M2.500 15H19L22.500 12.500M19 15V21.500" fill="none" stroke="#000" stroke-width=".9"/><rect x="4" y="16.500" width="14" height="2" fill="#fff" stroke="#000" stroke-width=".6"/><path d="M19.500 15.500L22.500 13V19L19.500 21.500Z" fill="#555"/></svg>
<svg style="position:absolute;left:121px;top:71px" width="24" height="24" viewBox="0 0 24 24"><path d="M4.500 3.500H15V18L12 21.500H4.500Z" fill="url(#gPaper)" stroke="#000" stroke-width="1.200"/><path d="M15 18H12V21.500" fill="none" stroke="#000" stroke-width=".9"/><path d="M9.500 4L14 1H20V5H16L13 7Z" fill="#fff" stroke="#333" stroke-width=".7"/><rect x="20.500" y=".5" width="2.500" height="5.500" fill="#000"/><path d="M9 6L13 3M10.500 7L14 4.500M12 7.500L15 5.500" stroke="#666" stroke-width=".7"/></svg>
<svg style="position:absolute;left:149px;top:71px" width="24" height="24" viewBox="0 0 24 24"><path d="M7.500 3L15 16M16.500 3L9 16" stroke="#000" stroke-width="1.300" fill="none"/><ellipse cx="7" cy="18.500" rx="2.300" ry="3.200" fill="none" stroke="#556" stroke-width="1" transform="rotate(30 7 18.500)"/><ellipse cx="17" cy="18.500" rx="2.300" ry="3.200" fill="none" stroke="#556" stroke-width="1" transform="rotate(-30 17 18.500)"/></svg>
<svg style="position:absolute;left:178px;top:71px" width="24" height="24" viewBox="0 0 24 24"><path d="M4.500 2.500H11L14.500 6V15.500H4.500Z" fill="url(#gPaper)" stroke="#000" stroke-width="1.100"/><path d="M9.500 8.500H16L19.500 12V21.500H9.500Z" fill="url(#gPaper)" stroke="#000" stroke-width="1.100"/><path d="M16 8.500V12H19.500M11 2.500V6H14.500" fill="none" stroke="#000" stroke-width=".8"/></svg>
<svg style="position:absolute;left:205px;top:71px" width="24" height="24" viewBox="0 0 24 24"><rect x="5.500" y="3.500" width="13" height="17" rx="2" fill="#fbee8a" stroke="#000" stroke-width="1.300"/><rect x="9" y="2" width="6" height="3" rx="1" fill="#ddd" stroke="#333" stroke-width=".8"/></svg>
<svg style="position:absolute;left:233px;top:71px" width="24" height="24" viewBox="0 0 24 24"><path d="M5 13.500Q10 6.500 17 8Q20.500 9.500 21 13L18.500 14.500Q17.500 10.500 13.500 10.500Q10 10.500 8 14.500Z" fill="#222"/><path d="M2.500 16.500L5 9L11 15Z" fill="#000"/><path d="M24 18.500V24H18.500Z" fill="#6a6a6a"/></svg>
<svg style="position:absolute;left:261px;top:71px" width="24" height="24" viewBox="0 0 24 24"><path d="M8 21.500Q6 17 3.500 13.500Q2.500 11.500 4.500 11.500Q6 12 7.500 14.500V5Q7.500 3.500 8.700 3.500Q10 3.500 10 5V3.500Q10 2 11.300 2Q12.600 2 12.600 3.500V4.500Q12.600 3 13.900 3Q15.200 3 15.200 4.500V6.500Q15.200 5 16.400 5Q17.600 5 17.600 6.500V15Q17.600 19 16 21.500Z" fill="#f4f4f4" stroke="#111" stroke-width=".9"/><path d="M10 5V11M12.600 4.500V11M15.200 6.500V11" stroke="#111" stroke-width=".8"/></svg>
<svg style="position:absolute;left:289px;top:71px" width="24" height="24" viewBox="0 0 24 24"><ellipse cx="12" cy="12.500" rx="10" ry="3.500" fill="none" stroke="#777" stroke-width=".8"/><ellipse cx="12" cy="12.500" rx="3.500" ry="10" fill="none" stroke="#777" stroke-width=".8"/><path d="M13.500 9L16.500 11.500L13 12.500ZM10.500 16L7.500 14L11 12.800Z" fill="#000"/></svg>
<svg style="position:absolute;left:317px;top:71px" width="24" height="24" viewBox="0 0 24 24"><path d="M10.9 13.1L4 20" stroke="#111" stroke-width="2.2" stroke-linecap="round"/><circle cx="15" cy="9" r="5.8" fill="#fff" stroke="#333" stroke-width="1.1"/><path d="M12.500 7.500H17.500M15 5V10M12.500 12H17.500" stroke="#111" stroke-width=".9"/></svg>
<svg style="position:absolute;left:345px;top:71px" width="24" height="24" viewBox="0 0 24 24"><rect x="8.500" y="2" width="13.500" height="12.500" fill="none" stroke="#000" stroke-width="1" stroke-dasharray="1.800 1.400"/><path d="M7.6 15.9L2.5 20.5" stroke="#111" stroke-width="2.2" stroke-linecap="round"/><circle cx="11.5" cy="12" r="5.6" fill="#f4f4f4" stroke="#333" stroke-width="1.1"/><path d="M9 14.500H10.500M12.500 14.500H14" stroke="#555" stroke-width=".8"/></svg>
<svg style="position:absolute;left:373px;top:71px" width="24" height="24" viewBox="0 0 24 24"><path d="M9.4 14.1L4.5 20" stroke="#111" stroke-width="2.2" stroke-linecap="round"/><circle cx="14" cy="9.5" r="6.5" fill="#f8f8f8" stroke="#333" stroke-width="1.1"/><path d="M1.500 2.500H6L1.500 6.500ZM22.500 2.500V6.500L18.500 2.500ZM1.500 21.500V17.500L5.500 21.500ZM22.500 21.500H18.500L22.500 17.500Z" fill="#000"/></svg>
<svg style="position:absolute;left:401px;top:71px" width="24" height="24" viewBox="0 0 24 24"><path d="M8.4 14.6L3 20" stroke="#111" stroke-width="2.2" stroke-linecap="round"/><circle cx="13.5" cy="9.5" r="7.3" fill="#f0f0f0" stroke="#333" stroke-width="1.1"/><circle cx="15.500" cy="7.500" r="3" fill="#f3e437" stroke="#6b6400" stroke-width=".7"/><circle cx="11.500" cy="11.500" r="3" fill="#f3e437" stroke="#6b6400" stroke-width=".7"/></svg>
<svg style="position:absolute;left:429px;top:71px" width="24" height="24" viewBox="0 0 24 24"><path d="M4 8.500Q9 2.500 17.500 5.500L16 8Q10 6 7 10.500Z" fill="#222"/><path d="M1.500 10.500L4.500 4L9.500 9.500Z" fill="#000"/><path d="M10.0 16.0L6 20" stroke="#111" stroke-width="1.8" stroke-linecap="round"/><circle cx="13" cy="13" r="4.3" fill="#fff" stroke="#333" stroke-width="1"/><path d="M24 18.500V24H18.500Z" fill="#6a6a6a"/></svg>
<svg style="position:absolute;left:457px;top:71px" width="24" height="24" viewBox="0 0 24 24"><rect x="2.500" y="2.500" width="19" height="17" fill="#c8c8c8" stroke="#000" stroke-width="1.300"/><path d="M12 2.500V19.500M2.500 11H21.500" stroke="#000" stroke-width="1.300"/><rect x="12.700" y="3.200" width="3.500" height="1.200" fill="#1a2acc"/><path d="M24 18.500V24H18.500Z" fill="#6a6a6a"/></svg>
<svg style="position:absolute;left:485px;top:71px" width="24" height="24" viewBox="0 0 24 24"><path d="M2 14.500Q2 12 5 11.500L8 11L10 7.500H16.500L17.500 11Q20.500 11.500 20.500 14.500V15.500H2Z" fill="#e01818" stroke="#800" stroke-width=".5"/><path d="M11 8.500H15.500L16 10.500H10Z" fill="#fff"/><circle cx="6" cy="15.500" r="2" fill="#111"/><circle cx="16" cy="15.500" r="2" fill="#111"/><circle cx="6" cy="15.500" r=".8" fill="#bbb"/><circle cx="16" cy="15.500" r=".8" fill="#bbb"/><path d="M1 18H21" stroke="#aaa" stroke-width=".8"/><path d="M24 18.500V24H18.500Z" fill="#6a6a6a"/></svg>
<svg style="position:absolute;left:513px;top:71px" width="24" height="24" viewBox="0 0 24 24"><path d="M9 6.500L22 11L16 21.500L2 16Z" fill="none" stroke="#aaa" stroke-width=".7"/><path d="M6.700 9.700L20 14.500M4.300 12.800L18 18M13.300 8L7 18M17.700 9.500L11.500 19.800" stroke="#aaa" stroke-width=".7"/><path d="M12 13.500L14.500 8" stroke="#1e9e1e" stroke-width="1.300"/><path d="M12 13.500L19 15.500" stroke="#c81e1e" stroke-width="1.300"/><rect x="10.500" y="12" width="3" height="3" fill="#fff" stroke="#000" stroke-width="1"/><path d="M24 18.500V24H18.500Z" fill="#6a6a6a"/></svg>
<svg style="position:absolute;left:541px;top:71px" width="24" height="24" viewBox="0 0 24 24"><circle cx="11" cy="12" r="8.300" fill="none" stroke="#777" stroke-width=".9"/><path d="M11 12H21" stroke="#000" stroke-width="1.100"/><circle cx="11" cy="12" r="1.400" fill="#fff" stroke="#000" stroke-width=".8"/><path d="M24 18.500V24H18.500Z" fill="#6a6a6a"/></svg>
<svg style="position:absolute;left:569px;top:71px" width="24" height="24" viewBox="0 0 24 24"><circle cx="8" cy="8.500" r="2.800" fill="#ffe019" stroke="#b36b00" stroke-width=".8"/><rect x="13" y="7.500" width="6" height="6" fill="#ffe019" stroke="#b36b00" stroke-width=".8"/><path d="M7 18.500L9.500 14L12 18.500Z" fill="none" stroke="#b3541e" stroke-width=".9"/><path d="M18.500 1.500H21.500V4.500M2.500 18.500V21.500H5.500" fill="none" stroke="#000" stroke-width="1.100"/><path d="M24 18.500V24H18.500Z" fill="#6a6a6a"/></svg>
<svg style="position:absolute;left:597px;top:71px" width="24" height="24" viewBox="0 0 24 24"><path d="M6 8.500A6 6 0 1 1 18 8.500Q18 11 15.500 14L15 17H9L8.500 14Q6 11 6 8.500Z" fill="url(#gGrey)" stroke="#888" stroke-width=".6"/><rect x="9.500" y="17" width="5" height="3.500" rx="1" fill="#ddd" stroke="#999" stroke-width=".6"/><path d="M24 18.500V24H18.500Z" fill="#6a6a6a"/></svg>
<svg style="position:absolute;left:625px;top:71px" width="24" height="24" viewBox="0 0 24 24"><path d="M8 11V7.500Q8 3.500 12 3.500Q16 3.500 16 7.500V11" fill="none" stroke="#000" stroke-width="1.800"/><rect x="6" y="10.500" width="12" height="10" rx="1" fill="#b8b8b8" stroke="#000" stroke-width="1.200"/><path d="M8 13.500H16M8 16H16M8 18.500H16" stroke="#eee" stroke-width="1"/><path d="M24 18.500V24H18.500Z" fill="#6a6a6a"/></svg>
<svg style="position:absolute;left:653px;top:71px" width="24" height="24" viewBox="0 0 24 24"><g transform="translate(0 0) scale(1.0)" stroke-linejoin="round"><path d="M3 3.300L10.800 13.400L10.300 21.700L3 12.600Z" fill="#fff"/><path d="M3 8.500L10.600 17.600L10.300 21.700L3 12.600Z" fill="#5b6cf2"/><path d="M3 10.600L10.500 19.700L10.300 21.700L3 12.600Z" fill="#1c2a96"/><path d="M10.800 13.400L20.800 7.200V16.500L10.300 21.700Z" fill="#d9d9d6"/><path d="M10.800 13.400L20.800 7.200V10.300L10.700 16.400Z" fill="#e01400"/><path d="M10.500 18.800L20.800 13.400V16.500L10.300 21.700Z" fill="#1c2a96"/><path d="M3 3.300L20.800 7.200Q16 11.500 10.800 13.400Z" fill="#ff5a14"/><path d="M3 3.300L20.800 7.200V16.500L10.300 21.700L3 12.600Z" fill="none" stroke="#111" stroke-width="1.300"/></g><path d="M24 18.500V24H18.500Z" fill="#6a6a6a"/></svg>
<svg style="position:absolute;left:681px;top:71px" width="24" height="24" viewBox="0 0 24 24"><path d="M11.5 11.5L11.50 2.50A9 9 0 0 1 16.38 3.94Z" fill="#ff0000"/><path d="M11.5 11.5L16.00 3.71A9 9 0 0 1 19.51 7.40Z" fill="#ff8000"/><path d="M11.5 11.5L19.29 7.00A9 9 0 0 1 20.49 11.95Z" fill="#ffff00"/><path d="M11.5 11.5L20.50 11.50A9 9 0 0 1 19.06 16.38Z" fill="#80ff00"/><path d="M11.5 11.5L19.29 16.00A9 9 0 0 1 15.60 19.51Z" fill="#00ff00"/><path d="M11.5 11.5L16.00 19.29A9 9 0 0 1 11.05 20.49Z" fill="#00ff80"/><path d="M11.5 11.5L11.50 20.50A9 9 0 0 1 6.62 19.06Z" fill="#00ffff"/><path d="M11.5 11.5L7.00 19.29A9 9 0 0 1 3.49 15.60Z" fill="#0080ff"/><path d="M11.5 11.5L3.71 16.00A9 9 0 0 1 2.51 11.05Z" fill="#0000ff"/><path d="M11.5 11.5L2.50 11.50A9 9 0 0 1 3.94 6.62Z" fill="#8000ff"/><path d="M11.5 11.5L3.71 7.00A9 9 0 0 1 7.40 3.49Z" fill="#ff00ff"/><path d="M11.5 11.5L7.00 3.71A9 9 0 0 1 11.95 2.51Z" fill="#ff0080"/><circle cx="11.5" cy="11.5" r="9" fill="none" stroke="#222" stroke-width="1.200"/><circle cx="11.5" cy="11.5" r="4.5" fill="#fff" stroke="#222" stroke-width="1"/><path d="M24 18.500V24H18.500Z" fill="#6a6a6a"/></svg>
<svg style="position:absolute;left:709px;top:71px" width="24" height="24" viewBox="0 0 24 24"><circle cx="12" cy="12" r="8.500" fill="url(#gGrey)" stroke="#555" stroke-width=".6"/><path d="M12 3.500Q10.500 12 12 20.500M3.500 12Q12 14 20.500 12" fill="none" stroke="#222" stroke-width="1"/></svg>
<svg style="position:absolute;left:738px;top:71px" width="24" height="24" viewBox="0 0 24 24"><rect x="1" y="1" width="20" height="20" fill="#dcdde2"/><circle cx="11" cy="11" r="8.500" fill="url(#gGrey)" stroke="#555" stroke-width=".6"/><path d="M11 2.500Q9.500 11 11 19.500M2.500 11Q11 13 19.500 11" fill="none" stroke="#222" stroke-width="1"/><path d="M24 18.500V24H18.500Z" fill="#6a6a6a"/></svg>
<svg style="position:absolute;left:765px;top:71px" width="24" height="24" viewBox="0 0 24 24"><ellipse cx="13" cy="20" rx="8" ry="2" fill="#999" opacity=".5"/><circle cx="12" cy="11.500" r="8.800" fill="url(#gBlue)"/><ellipse cx="9" cy="7" rx="3" ry="2" fill="#fff" opacity=".75"/><path d="M24 18.500V24H18.500Z" fill="#6a6a6a"/></svg>
<svg style="position:absolute;left:798px;top:71px" width="24" height="24" viewBox="0 0 24 24"><path d="M5 4L17 1.500L14.500 13.500Z" fill="#f79a1e" stroke="#5a2d00" stroke-width=".7"/><ellipse cx="15.800" cy="7.500" rx="1.800" ry="6" fill="#ffe9b0" stroke="#5a2d00" stroke-width=".6" transform="rotate(12 15.800 7.500)"/><path d="M24 18.500V24H18.500Z" fill="#6a6a6a"/></svg>
<svg style="position:absolute;left:821px;top:71px" width="24" height="24" viewBox="0 0 24 24"><path d="M9.500 2.500H14.500L15 5L17.500 6L19.500 4.500L22 7.500L20.500 9.500L21.500 12H23V16H21L20 18L21.500 20L19 22L17 20.500L14.500 21.500H9.500L7 20.500L5 22L2.500 20L4 18L3 16H1V12H2.500L3.500 9.500L2 7.500L4.500 4.500L6.500 6L9 5Z" fill="#f2d24a" stroke="#4a3a00" stroke-width=".9" transform="translate(0 -1)"/><circle cx="12" cy="11.500" r="4" fill="#ebecf0" stroke="#4a3a00" stroke-width=".8"/><rect x="10.200" y="6" width="3.600" height="8" rx="1.500" fill="#cfcfcf" stroke="#333" stroke-width=".7"/><path d="M24 18.500V24H18.500Z" fill="#6a6a6a"/></svg>
<svg style="position:absolute;left:850px;top:71px" width="24" height="24" viewBox="0 0 24 24"><path d="M1 3.500H8M1 11.500H9.500M3 4.500V10.500M10.500 13V21.500M19.500 13V21.500M12 19.500H18" fill="none" stroke="#000" stroke-width="1.100"/><path d="M3 3.800L1.800 6H4.200ZM3 11.200L1.800 9H4.200ZM11 19.500L13 18.300V20.700ZM19 19.500L17 18.300V20.700Z" fill="#000"/><rect x="8" y="2.200" width="2.400" height="2.400" fill="#fff" stroke="#000" stroke-width=".8"/><rect x="9.300" y="10.300" width="2.400" height="2.400" fill="#fff" stroke="#000" stroke-width=".8"/><rect x="18.300" y="10.300" width="2.400" height="2.400" fill="#fff" stroke="#000" stroke-width=".8"/><path d="M24 18.500V24H18.500Z" fill="#6a6a6a"/></svg>
<svg style="position:absolute;left:877px;top:71px" width="24" height="24" viewBox="0 0 24 24"><circle cx="12" cy="11.500" r="10.300" fill="url(#gGreen)" stroke="#555" stroke-width="1.200"/><path d="M5 17Q8 11 10.500 11.500L12 9L10.500 4M12 9L21 5M10.500 11.500Q14 13.500 15 17.500L19 19" fill="none" stroke="#2a3a2a" stroke-width="1.400"/><path d="M6 18.500Q9 12 12 13L11.500 19.500Z" fill="#2a3a2a"/><path d="M24 18.500V24H18.500Z" fill="#6a6a6a"/></svg>
<svg style="position:absolute;left:905px;top:71px" width="24" height="24" viewBox="0 0 24 24"><circle cx="11.5" cy="11.5" r="10" fill="url(#gHelp)"/><text x="11.5" y="17.7" font-family="Liberation Serif" font-weight="bold" font-size="17.5" fill="#fff" text-anchor="middle">?</text><path d="M24 18.500V24H18.500Z" fill="#6a6a6a"/></svg>
<!-- panel -->
<svg width="0" height="0" style="position:absolute"><defs><linearGradient id="gPaper" x1="0" y1="0" x2="1" y2="1"><stop offset="0" stop-color="#fff"/><stop offset="1" stop-color="#d9d9d9"/></linearGradient><linearGradient id="gFold" x1="0" y1="0" x2="0" y2="1"><stop offset="0" stop-color="#fff2a8"/><stop offset="1" stop-color="#f2b200"/></linearGradient><radialGradient id="gBlue" cx=".35" cy=".3" r=".8"><stop offset="0" stop-color="#9ec0ff"/><stop offset=".35" stop-color="#2d5fe0"/><stop offset="1" stop-color="#0a1a78"/></radialGradient><radialGradient id="gGrey" cx=".35" cy=".3" r=".8"><stop offset="0" stop-color="#fff"/><stop offset=".5" stop-color="#bdbdbd"/><stop offset="1" stop-color="#555"/></radialGradient><radialGradient id="gGreen" cx=".4" cy=".35" r=".8"><stop offset="0" stop-color="#c9ecb4"/><stop offset=".7" stop-color="#8fc97a"/><stop offset="1" stop-color="#3d6b35"/></radialGradient><radialGradient id="gHelp" cx=".4" cy=".3" r=".8"><stop offset="0" stop-color="#7a86ea"/><stop offset=".5" stop-color="#2f3cc4"/><stop offset="1" stop-color="#151b7a"/></radialGradient><linearGradient id="gLayer" x1="0" y1="0" x2="1" y2="0"><stop offset="0" stop-color="#ff6a2a"/><stop offset="1" stop-color="#e03a10"/></linearGradient><linearGradient id="gPrim" x1="0" y1="0" x2="1" y2="1"><stop offset="0" stop-color="#b9c6ff"/><stop offset="1" stop-color="#4a63e0"/></linearGradient></defs></svg>
<svg style="position:absolute;left:1838px;top:108px" width="24" height="24" viewBox="0 0 24 24"><g transform="translate(0 0) scale(1.0)" stroke-linejoin="round"><path d="M3 3.300L10.800 13.400L10.300 21.700L3 12.600Z" fill="#fff"/><path d="M3 8.500L10.600 17.600L10.300 21.700L3 12.600Z" fill="#5b6cf2"/><path d="M3 10.600L10.500 19.700L10.300 21.700L3 12.600Z" fill="#1c2a96"/><path d="M10.800 13.400L20.800 7.200V16.500L10.300 21.700Z" fill="#d9d9d6"/><path d="M10.800 13.400L20.800 7.200V10.300L10.700 16.400Z" fill="#e01400"/><path d="M10.500 18.800L20.800 13.400V16.500L10.300 21.700Z" fill="#1c2a96"/><path d="M3 3.300L20.800 7.200Q16 11.500 10.800 13.400Z" fill="#ff5a14"/><path d="M3 3.300L20.800 7.200V16.500L10.300 21.700L3 12.600Z" fill="none" stroke="#111" stroke-width="1.300"/></g></svg>
<svg style="position:absolute;left:1866px;top:108px" width="24" height="24" viewBox="0 0 24 24"><path d="M12.500 19.500A7.500 9.500 0 1 1 14.500 3.500" fill="none" stroke="#111" stroke-width="1"/><path d="M12 2L15 4.200L12.800 6.500" fill="none" stroke="#111" stroke-width="1.100"/><g transform="translate(6.5 3.5) scale(0.85)" stroke-linejoin="round"><path d="M3 3.300L10.800 13.400L10.300 21.700L3 12.600Z" fill="#fff"/><path d="M3 8.500L10.600 17.600L10.300 21.700L3 12.600Z" fill="#5b6cf2"/><path d="M3 10.600L10.500 19.700L10.300 21.700L3 12.600Z" fill="#1c2a96"/><path d="M10.800 13.400L20.800 7.200V16.500L10.300 21.700Z" fill="#d9d9d6"/><path d="M10.800 13.400L20.800 7.200V10.300L10.700 16.400Z" fill="#e01400"/><path d="M10.500 18.800L20.800 13.400V16.500L10.300 21.700Z" fill="#1c2a96"/><path d="M3 3.300L20.800 7.200Q16 11.500 10.800 13.400Z" fill="#ff9468"/><path d="M3 3.300L20.800 7.200V16.500L10.300 21.700L3 12.600Z" fill="none" stroke="#111" stroke-width="1.300"/></g></svg>
<svg style="position:absolute;left:1838px;top:136px" width="24" height="24" viewBox="0 0 24 24"><g transform="translate(4.5 3.5) scale(0.85)" stroke-linejoin="round"><path d="M3 3.300L10.800 13.400L10.300 21.700L3 12.600Z" fill="#fff"/><path d="M3 8.500L10.600 17.600L10.300 21.700L3 12.600Z" fill="#5b6cf2"/><path d="M3 10.600L10.500 19.700L10.300 21.700L3 12.600Z" fill="#1c2a96"/><path d="M10.800 13.400L20.800 7.200V16.500L10.300 21.700Z" fill="#d9d9d6"/><path d="M10.800 13.400L20.800 7.200V10.300L10.700 16.400Z" fill="#e01400"/><path d="M10.500 18.800L20.800 13.400V16.500L10.300 21.700Z" fill="#1c2a96"/><path d="M3 3.300L20.800 7.200Q16 11.500 10.800 13.400Z" fill="#ff9468"/><path d="M3 3.300L20.800 7.200V16.500L10.300 21.700L3 12.600Z" fill="none" stroke="#111" stroke-width="1.300"/></g><path d="M1 8L3 10.500L9 2.500" fill="none" stroke="#111" stroke-width="1.100"/></svg>
<svg style="position:absolute;left:1866px;top:136px" width="24" height="24" viewBox="0 0 24 24"><path d="M12.500 19.500A7.500 9.500 0 1 1 14.500 3.500" fill="none" stroke="#111" stroke-width="1"/><path d="M12 2L15 4.200L12.800 6.500" fill="none" stroke="#111" stroke-width="1.100"/><g transform="translate(6.5 3.5) scale(0.85)" stroke-linejoin="round"><path d="M3 3.300L10.800 13.400L10.300 21.700L3 12.600Z" fill="#fff"/><path d="M3 8.500L10.600 17.600L10.300 21.700L3 12.600Z" fill="#5b6cf2"/><path d="M3 10.600L10.500 19.700L10.300 21.700L3 12.600Z" fill="#1c2a96"/><path d="M10.800 13.400L20.800 7.200V16.500L10.300 21.700Z" fill="#d9d9d6"/><path d="M10.800 13.400L20.800 7.200V10.300L10.700 16.400Z" fill="#e01400"/><path d="M10.500 18.800L20.800 13.400V16.500L10.300 21.700Z" fill="#1c2a96"/><path d="M3 3.300L20.800 7.200Q16 11.500 10.800 13.400Z" fill="#ff9468"/><path d="M3 3.300L20.800 7.200V16.500L10.300 21.700L3 12.600Z" fill="none" stroke="#111" stroke-width="1.300"/></g><path d="M9.500 11L12.500 15L21 3" fill="none" stroke="#000" stroke-width="2.400"/></svg>
<svg style="position:absolute;left:1838px;top:164px" width="24" height="24" viewBox="0 0 24 24"><path d="M4 13L8 11L9 13H15L16 11L20 13V18L12 21.500L4 18Z" fill="#e4e4e4" stroke="#222" stroke-width="1"/><path d="M4 13L12 16.500L20 13M12 16.500V21.500" fill="none" stroke="#222" stroke-width="1"/><path d="M8 7A4.300 4.500 0 1 1 16 7Q14.500 9.500 14.500 12.500H9.500Q9.500 9.500 8 7Z" fill="#ffe45c" stroke="#222" stroke-width=".9"/><rect x="9.500" y="12.500" width="5" height="2.500" fill="#ccc" stroke="#222" stroke-width=".7"/></svg>
<svg style="position:absolute;left:1866px;top:164px" width="24" height="24" viewBox="0 0 24 24"><path d="M4 13L8 11L9 13H15L16 11L20 13V18L12 21.500L4 18Z" fill="#e4e4e4" stroke="#222" stroke-width="1"/><path d="M4 13L12 16.500L20 13M12 16.500V21.500" fill="none" stroke="#222" stroke-width="1"/><path d="M8 7A4.300 4.500 0 1 1 16 7Q14.500 9.500 14.500 12.500H9.500Q9.500 9.500 8 7Z" fill="#a8a8a8" stroke="#222" stroke-width=".9"/><rect x="9.500" y="12.500" width="5" height="2.500" fill="#ccc" stroke="#222" stroke-width=".7"/></svg>
<svg style="position:absolute;left:1838px;top:192px" width="24" height="24" viewBox="0 0 24 24"><g transform="translate(4.5 4.5) scale(0.85)" stroke-linejoin="round"><path d="M3 3.300L10.800 13.400L10.300 21.700L3 12.600Z" fill="#fff"/><path d="M3 8.500L10.600 17.600L10.300 21.700L3 12.600Z" fill="#5b6cf2"/><path d="M3 10.600L10.500 19.700L10.300 21.700L3 12.600Z" fill="#1c2a96"/><path d="M10.800 13.400L20.800 7.200V16.500L10.300 21.700Z" fill="#d9d9d6"/><path d="M10.800 13.400L20.800 7.200V10.300L10.700 16.400Z" fill="#e01400"/><path d="M10.500 18.800L20.800 13.400V16.500L10.300 21.700Z" fill="#1c2a96"/><path d="M3 3.300L20.800 7.200Q16 11.500 10.800 13.400Z" fill="#ff9468"/><path d="M3 3.300L20.800 7.200V16.500L10.300 21.700L3 12.600Z" fill="none" stroke="#111" stroke-width="1.300"/></g><path d="M1.500 5.500A3.800 4 0 1 1 9 5.500Q8 7.500 8 10H3.500Q3.500 7.500 1.500 5.500Z" fill="#ffe45c" stroke="#222" stroke-width=".8"/></svg>
<svg style="position:absolute;left:1866px;top:192px" width="24" height="24" viewBox="0 0 24 24"><path d="M5 8Q3 4 7 3" fill="none" stroke="#111" stroke-width="1"/><path d="M2.500 6L5 8.500L7 5.500" fill="none" stroke="#111" stroke-width="1"/><g transform="translate(5.5 2.5) scale(0.9)" stroke-linejoin="round"><path d="M3 3.300L10.800 13.400L10.300 21.700L3 12.600Z" fill="#fff"/><path d="M3 8.500L10.600 17.600L10.300 21.700L3 12.600Z" fill="#5b6cf2"/><path d="M3 10.600L10.500 19.700L10.300 21.700L3 12.600Z" fill="#1c2a96"/><path d="M10.800 13.400L20.800 7.200V16.500L10.300 21.700Z" fill="#d9d9d6"/><path d="M10.800 13.400L20.800 7.200V10.300L10.700 16.400Z" fill="#e01400"/><path d="M10.500 18.800L20.800 13.400V16.500L10.300 21.700Z" fill="#1c2a96"/><path d="M3 3.300L20.800 7.200Q16 11.500 10.800 13.400Z" fill="#ff5a14"/><path d="M3 3.300L20.800 7.200V16.500L10.300 21.700L3 12.600Z" fill="none" stroke="#111" stroke-width="1.300"/></g></svg>
<svg style="position:absolute;left:1603px;top:250px" width="36" height="15" fill="#333" font-family="Liberation Sans, Noto Sans CJK KR, sans-serif" font-size="12" font-weight="normal"><text x="0.00" y="11.66">레이어</text></svg>
<div style="position:absolute;left:1643px;top:256px;width:276px;height:1px;background:#c3cae0"></div><div style="position:absolute;left:1643px;top:258px;width:276px;height:1px;background:#c3cae0"></div>
<svg style="position:absolute;left:1596px;top:264px" width="323" height="26" viewBox="1596 264 323 26" fill="none" stroke="#b7c2dd"><path d="M1598.500 953V287.500H1640.500V266.500H1681.500V287.500H1919"/></svg>
<div style="position:absolute;left:1598px;top:288px;width:1px;height:664px;background:#b7c2dd"></div>
<svg style="position:absolute;left:1609px;top:269px" width="18" height="18" viewBox="0 0 18 18"><path d="M9 9L9.00 1.50A7.5 7.5 0 0 1 13.07 2.70Z" fill="#ff0000"/><path d="M9 9L12.75 2.50A7.5 7.5 0 0 1 15.67 5.58Z" fill="#ff8000"/><path d="M9 9L15.50 5.25A7.5 7.5 0 0 1 16.49 9.37Z" fill="#ffff00"/><path d="M9 9L16.50 9.00A7.5 7.5 0 0 1 15.30 13.07Z" fill="#80ff00"/><path d="M9 9L15.50 12.75A7.5 7.5 0 0 1 12.42 15.67Z" fill="#00ff00"/><path d="M9 9L12.75 15.50A7.5 7.5 0 0 1 8.63 16.49Z" fill="#00ff80"/><path d="M9 9L9.00 16.50A7.5 7.5 0 0 1 4.93 15.30Z" fill="#00ffff"/><path d="M9 9L5.25 15.50A7.5 7.5 0 0 1 2.33 12.42Z" fill="#0080ff"/><path d="M9 9L2.50 12.75A7.5 7.5 0 0 1 1.51 8.63Z" fill="#0000ff"/><path d="M9 9L1.50 9.00A7.5 7.5 0 0 1 2.70 4.93Z" fill="#8000ff"/><path d="M9 9L2.50 5.25A7.5 7.5 0 0 1 5.58 2.33Z" fill="#ff00ff"/><path d="M9 9L5.25 2.50A7.5 7.5 0 0 1 9.37 1.51Z" fill="#ff0080"/><circle cx="9" cy="9" r="7.5" fill="none" stroke="#222" stroke-width="1.200"/><circle cx="9" cy="9" r="3.6" fill="#fff" stroke="#222" stroke-width="1"/></svg>
<svg style="position:absolute;left:1649px;top:268px" width="22" height="22" viewBox="0 0 22 22"><g transform="translate(0 0) scale(0.85)" stroke-linejoin="round"><path d="M3 3.300L10.800 13.400L10.300 21.700L3 12.600Z" fill="#fff"/><path d="M3 8.500L10.600 17.600L10.300 21.700L3 12.600Z" fill="#5b6cf2"/><path d="M3 10.600L10.500 19.700L10.300 21.700L3 12.600Z" fill="#1c2a96"/><path d="M10.800 13.400L20.800 7.200V16.500L10.300 21.700Z" fill="#d9d9d6"/><path d="M10.800 13.400L20.800 7.200V10.300L10.700 16.400Z" fill="#e01400"/><path d="M10.500 18.800L20.800 13.400V16.500L10.300 21.700Z" fill="#1c2a96"/><path d="M3 3.300L20.800 7.200Q16 11.500 10.800 13.400Z" fill="#ff5a14"/><path d="M3 3.300L20.800 7.200V16.500L10.300 21.700L3 12.600Z" fill="none" stroke="#111" stroke-width="1.300"/></g></svg>
<svg style="position:absolute;left:1692px;top:268px" width="20" height="20" viewBox="0 0 20 20"><circle cx="9" cy="12" r="7.500" fill="url(#gBlue)"/><ellipse cx="9" cy="19" rx="7" ry="1.500" fill="#888" opacity=".5"/><path d="M11 6L16 2M16 2H12.500M16 2V5.500" stroke="#222" stroke-width="1.200" fill="none"/><rect x="10" y="3" width="6" height="4" fill="#eee" stroke="#222" stroke-width=".6" transform="rotate(-35 13 5)"/></svg>
<svg style="position:absolute;left:1736px;top:268px" width="20" height="20" viewBox="0 0 20 20"><path d="M3 16L12 6L16 9L7 19Z" fill="#f2f2f2" stroke="#555" stroke-width=".9"/><path d="M10 8L14 3.500L17.500 6L14 10.500Z" fill="#e8622a" stroke="#7a2a0a" stroke-width=".7"/><path d="M15 3L16.500 1L18.500 2.500L17 4.500Z" fill="#ddd" stroke="#555" stroke-width=".6"/></svg>
<svg style="position:absolute;left:1780px;top:271px" width="15" height="12" viewBox="0 0 21 17"><path d="M1 3.500Q1 2.500 2 2.500H7L9 4.500H16V7H1Z" fill="#f2c84b" stroke="#8a6a10" stroke-width=".8"/><path d="M1 15.500L4 7H20L17 15.500Z" fill="url(#gFold)" stroke="#8a6a10" stroke-width=".8"/></svg>
<svg style="position:absolute;left:1824px;top:271px" width="14" height="14" viewBox="0 0 14 14"><rect x=".5" y=".5" width="13" height="13" fill="#3a53c8" stroke="#333" stroke-width="1"/><rect x="1" y="1" width="12" height="2.500" fill="#e8e8f8"/><text x="7" y="12" font-family="Liberation Serif" font-weight="bold" font-size="10" fill="#cfd6ff" text-anchor="middle">?</text></svg>
<svg style="position:absolute;left:1865px;top:269px" width="18" height="19" viewBox="0 0 18 19"><path d="M9 1.500Q14 2 14 8V12L16.500 15H1.500L4 12V8Q4 2 9 1.500Z" fill="#1e78e6"/><circle cx="9" cy="16.500" r="1.800" fill="#1e78e6"/></svg>
<svg style="position:absolute;left:1904px;top:270px" width="16" height="16" viewBox="0 0 16 16"><circle cx="8" cy="8" r="2" fill="none" stroke="#cfd3dc"/><circle cx="8" cy="8" r="6" fill="none" stroke="#cfd3dc" stroke-width="1.500" stroke-dasharray="2.400 1.400"/></svg>
<svg style="position:absolute;left:1607px;top:297px" width="18" height="18" viewBox="0 0 18 18"><path d="M3.500 1.500H11L14.500 5V16.500H3.500Z" fill="url(#gPaper)" stroke="#111" stroke-width="1"/><path d="M11 1.500V5H14.500" fill="none" stroke="#111" stroke-width="1"/></svg>
<svg style="position:absolute;left:1629px;top:297px" width="18" height="18" viewBox="0 0 18 18"><path d="M2.500 2.500H8L10.500 5V12.500H2.500Z" fill="#c9c9c9" stroke="#a0a0a0"/><path d="M7.500 6.500H13L15.500 9V16.500H7.500Z" fill="#c9c9c9" stroke="#a0a0a0"/></svg>
<svg style="position:absolute;left:1652px;top:297px" width="18" height="18" viewBox="0 0 18 18"><path d="M3 3L15 15M15 3L3 15" stroke="#b4b4b4" stroke-width="2" fill="none"/></svg>
<svg style="position:absolute;left:1675px;top:297px" width="18" height="18" viewBox="0 0 18 18"><path d="M2.500 13L9 5L15.500 13Z" fill="#c9c9c9" stroke="#a8a8a8"/></svg>
<svg style="position:absolute;left:1697px;top:297px" width="18" height="18" viewBox="0 0 18 18"><path d="M2.500 5L9 13L15.500 5Z" fill="#c9c9c9" stroke="#a8a8a8"/></svg>
<svg style="position:absolute;left:1720px;top:297px" width="18" height="18" viewBox="0 0 18 18"><path d="M12.500 2.500L5 9L12.500 15.500Z" fill="#b0b0b0" stroke="#a0a0a0"/></svg>
<svg style="position:absolute;left:1743px;top:297px" width="18" height="18" viewBox="0 0 18 18"><path d="M2 2.500H15L10 9V16H7V9Z" fill="#3f6fdc" stroke="#1a3a9a" stroke-width=".8"/><path d="M18 14V18H14Z" fill="#111"/></svg>
<svg style="position:absolute;left:1765px;top:297px" width="18" height="18" viewBox="0 0 18 18"><path d="M3.500 1.500H10L13.500 5V16.500H3.500Z" fill="#c9c9c9" stroke="#a0a0a0"/><path d="M18 14V18H14Z" fill="#999"/></svg>
<svg style="position:absolute;left:1788px;top:297px" width="18" height="18" viewBox="0 0 18 18"><path d="M4 16L11 7" stroke="#1a2f7a" stroke-width="3" stroke-linecap="round"/><path d="M6 5Q10 1 15 5L13 8Q10 5 8 7Z" fill="#333"/><path d="M18 14V18H14Z" fill="#111"/></svg>
<svg style="position:absolute;left:1812px;top:298px" width="16" height="16" viewBox="0 0 16 16"><circle cx="8" cy="8" r="7.5" fill="url(#gHelp)"/><text x="8" y="12.65" font-family="Liberation Serif" font-weight="bold" font-size="13.125" fill="#fff" text-anchor="middle">?</text></svg>
<div style="position:absolute;left:1599px;top:321px;width:320px;height:1px;background:#b7c2dd"></div>
<div style="position:absolute;left:1599px;top:322px;width:317px;height:614px;background:#fff"></div>
<div style="position:absolute;left:1916px;top:322px;width:3px;height:630px;background:#f0f0f0"></div>
<div style="position:absolute;left:1599px;top:936px;width:317px;height:16px;background:#f0f0f0"></div>
<div style="position:absolute;left:1598px;top:952px;width:321px;height:1px;background:#b7c2dd"></div>
<div style="position:absolute;left:1616px;top:943px;width:190px;height:2px;background:#808080"></div>
<div style="position:absolute;left:1748px;top:322px;width:1px;height:24px;background:#dfe3ee"></div>
<div style="position:absolute;left:1775px;top:322px;width:1px;height:24px;background:#dfe3ee"></div>
<div style="position:absolute;left:1795px;top:322px;width:1px;height:24px;background:#dfe3ee"></div>
<div style="position:absolute;left:1813px;top:322px;width:1px;height:24px;background:#dfe3ee"></div>
<div style="position:absolute;left:1831px;top:322px;width:1px;height:24px;background:#dfe3ee"></div>
<svg style="position:absolute;left:1604px;top:326px" width="36" height="15" fill="#444" font-family="Liberation Sans, Noto Sans CJK KR, sans-serif" font-size="12" font-weight="normal"><text x="0.00" y="11.66">레이어</text></svg>
<svg style="position:absolute;left:1753px;top:326px" width="19" height="15" fill="#444" font-family="Liberation Sans, Noto Sans CJK KR, sans-serif" font-size="12" font-weight="normal"><text x="0.00" y="11.66">현</text><text x="11.98" y="10.660">..</text></svg>
<svg style="position:absolute;left:1837px;top:326px" width="24" height="15" fill="#444" font-family="Liberation Sans, Noto Sans CJK KR, sans-serif" font-size="12" font-weight="normal"><text x="0.00" y="11.66">재질</text></svg>
<svg style="position:absolute;left:1608px;top:348px" width="36" height="15" fill="#000" font-family="Liberation Sans, Noto Sans CJK KR, sans-serif" font-size="12" font-weight="bold"><text x="0.00" y="11.66">기본값</text></svg>
<svg style="position:absolute;left:1755px;top:349px" width="14" height="12" viewBox="0 0 14 12"><path d="M1 6.500L4.500 10L13 1.500" fill="none" stroke="#000" stroke-width="1.500"/></svg>
<div style="position:absolute;left:1816px;top:348px;width:14px;height:14px;background:#000"></div>
<div style="position:absolute;left:1835px;top:349px;width:12px;height:12px;border-radius:50%;background:#f5f5f5"></div>
<div style="position:absolute;left:1599px;top:364px;width:317px;height:1px;background:#ececec"></div>
<!-- status -->
<svg style="position:absolute;left:60px;top:935px" width="90" height="22" viewBox="60 935 90 22" fill="none" stroke="#b7c2dd"><path d="M64.500 936V945.500L71.500 954.500H135.500Q138.500 954.500 138.500 951.500V936"/></svg>
<div class="t" style="left:74px;top:939px;color:#333;letter-spacing:-0.2px;">Perspective</div>
<div class="t" style="left:149px;top:939px;color:#333;">Top</div>
<div class="t" style="left:184px;top:939px;color:#333;">Front</div>
<div class="t" style="left:227px;top:939px;color:#333;">Right</div>
<svg style="position:absolute;left:270px;top:941px" width="10" height="10" viewBox="0 0 10 10" fill="none" stroke="#777"><path d="M3.500 .5h3v3h3v3h-3v3h-3v-3h-3v-3h3z"/></svg>
<div style="position:absolute;left:3px;top:960px;width:1px;height:22px;background:#c3cae0"></div><div style="position:absolute;left:5px;top:960px;width:1px;height:22px;background:#c3cae0"></div>
<div style="position:absolute;left:3px;top:987px;width:1px;height:22px;background:#c3cae0"></div><div style="position:absolute;left:5px;top:987px;width:1px;height:22px;background:#c3cae0"></div>
<div style="position:absolute;left:9px;top:965px;width:13px;height:13px;border-radius:3px;background:#005fb8"></div><svg style="position:absolute;left:9px;top:965px" width="13" height="13" viewBox="0 0 13 13"><path d="M3.200 6.700L5.500 9L9.900 4.300" stroke="#fff" stroke-width="1.200" fill="none" stroke-linecap="round" stroke-linejoin="round"/></svg>
<svg style="position:absolute;left:25px;top:964px" width="24" height="15" fill="#222" font-family="Liberation Sans, Noto Sans CJK KR, sans-serif" font-size="12" font-weight="normal"><text x="0.00" y="11.66">끝점</text></svg>
<div style="position:absolute;left:56px;top:965px;width:11px;height:11px;border-radius:3px;background:#fafafa;border:1px solid #6b6b6b"></div>
<svg style="position:absolute;left:72px;top:964px" width="36" height="15" fill="#222" font-family="Liberation Sans, Noto Sans CJK KR, sans-serif" font-size="12" font-weight="normal"><text x="0.00" y="11.66">근처점</text></svg>
<div style="position:absolute;left:115px;top:965px;width:13px;height:13px;border-radius:3px;background:#005fb8"></div><svg style="position:absolute;left:115px;top:965px" width="13" height="13" viewBox="0 0 13 13"><path d="M3.200 6.700L5.500 9L9.900 4.300" stroke="#fff" stroke-width="1.200" fill="none" stroke-linecap="round" stroke-linejoin="round"/></svg>
<svg style="position:absolute;left:131px;top:964px" width="12" height="15" fill="#222" font-family="Liberation Sans, Noto Sans CJK KR, sans-serif" font-size="12" font-weight="normal"><text x="0.00" y="11.66">점</text></svg>
<div style="position:absolute;left:150px;top:965px;width:13px;height:13px;border-radius:3px;background:#005fb8"></div><svg style="position:absolute;left:150px;top:965px" width="13" height="13" viewBox="0 0 13 13"><path d="M3.200 6.700L5.500 9L9.900 4.300" stroke="#fff" stroke-width="1.200" fill="none" stroke-linecap="round" stroke-linejoin="round"/></svg>
<svg style="position:absolute;left:166px;top:964px" width="36" height="15" fill="#222" font-family="Liberation Sans, Noto Sans CJK KR, sans-serif" font-size="12" font-weight="normal"><text x="0.00" y="11.66">중간점</text></svg>
<div style="position:absolute;left:209px;top:965px;width:13px;height:13px;border-radius:3px;background:#005fb8"></div><svg style="position:absolute;left:209px;top:965px" width="13" height="13" viewBox="0 0 13 13"><path d="M3.200 6.700L5.500 9L9.900 4.300" stroke="#fff" stroke-width="1.200" fill="none" stroke-linecap="round" stroke-linejoin="round"/></svg>
<svg style="position:absolute;left:225px;top:964px" width="36" height="15" fill="#222" font-family="Liberation Sans, Noto Sans CJK KR, sans-serif" font-size="12" font-weight="normal"><text x="0.00" y="11.66">중심점</text></svg>
<div style="position:absolute;left:268px;top:965px;width:13px;height:13px;border-radius:3px;background:#005fb8"></div><svg style="position:absolute;left:268px;top:965px" width="13" height="13" viewBox="0 0 13 13"><path d="M3.200 6.700L5.500 9L9.900 4.300" stroke="#fff" stroke-width="1.200" fill="none" stroke-linecap="round" stroke-linejoin="round"/></svg>
<svg style="position:absolute;left:284px;top:964px" width="36" height="15" fill="#222" font-family="Liberation Sans, Noto Sans CJK KR, sans-serif" font-size="12" font-weight="normal"><text x="0.00" y="11.66">교차점</text></svg>
<div style="position:absolute;left:327px;top:965px;width:13px;height:13px;border-radius:3px;background:#005fb8"></div><svg style="position:absolute;left:327px;top:965px" width="13" height="13" viewBox="0 0 13 13"><path d="M3.200 6.700L5.500 9L9.900 4.300" stroke="#fff" stroke-width="1.200" fill="none" stroke-linecap="round" stroke-linejoin="round"/></svg>
<svg style="position:absolute;left:343px;top:964px" width="36" height="15" fill="#222" font-family="Liberation Sans, Noto Sans CJK KR, sans-serif" font-size="12" font-weight="normal"><text x="0.00" y="11.66">수직점</text></svg>
<div style="position:absolute;left:386px;top:965px;width:11px;height:11px;border-radius:3px;background:#fafafa;border:1px solid #6b6b6b"></div>
<svg style="position:absolute;left:402px;top:964px" width="24" height="15" fill="#222" font-family="Liberation Sans, Noto Sans CJK KR, sans-serif" font-size="12" font-weight="normal"><text x="0.00" y="11.66">접점</text></svg>
<div style="position:absolute;left:433px;top:965px;width:11px;height:11px;border-radius:3px;background:#fafafa;border:1px solid #6b6b6b"></div>
<svg style="position:absolute;left:449px;top:964px" width="36" height="15" fill="#222" font-family="Liberation Sans, Noto Sans CJK KR, sans-serif" font-size="12" font-weight="normal"><text x="0.00" y="11.66">사분점</text></svg>
<div style="position:absolute;left:492px;top:965px;width:11px;height:11px;border-radius:3px;background:#fafafa;border:1px solid #6b6b6b"></div>
<svg style="position:absolute;left:508px;top:964px" width="36" height="15" fill="#222" font-family="Liberation Sans, Noto Sans CJK KR, sans-serif" font-size="12" font-weight="normal"><text x="0.00" y="11.66">매듭점</text></svg>
<div style="position:absolute;left:551px;top:965px;width:11px;height:11px;border-radius:3px;background:#fafafa;border:1px solid #6b6b6b"></div>
<svg style="position:absolute;left:567px;top:964px" width="24" height="15" fill="#222" font-family="Liberation Sans, Noto Sans CJK KR, sans-serif" font-size="12" font-weight="normal"><text x="0.00" y="11.66">정점</text></svg>
<div style="position:absolute;left:599px;top:967px;width:9px;height:9px;border-radius:50%;background:#fafafa;border:1px solid #d0d0d0"></div>
<svg style="position:absolute;left:614px;top:964px" width="24" height="15" fill="#222" font-family="Liberation Sans, Noto Sans CJK KR, sans-serif" font-size="12" font-weight="normal"><text x="0.00" y="11.66">투영</text></svg>
<div style="position:absolute;left:647px;top:967px;width:9px;height:9px;border-radius:50%;background:#fafafa;border:1px solid #d0d0d0"></div>
<svg style="position:absolute;left:662px;top:964px" width="56" height="15" fill="#222" font-family="Liberation Sans, Noto Sans CJK KR, sans-serif" font-size="12" font-weight="normal"><text x="0.00" y="11.66">사용</text><text x="27.95" y="11.66">안</text><text x="43.93" y="11.66">함</text></svg>
<div style="position:absolute;left:1px;top:985px;width:1917px;height:1px;background:#d3d8e8"></div>
<div style="position:absolute;left:9px;top:992px;width:13px;height:13px;border-radius:3px;background:#005fb8"></div><svg style="position:absolute;left:9px;top:992px" width="13" height="13" viewBox="0 0 13 13"><path d="M3.200 6.700L5.500 9L9.900 4.300" stroke="#fff" stroke-width="1.200" fill="none" stroke-linecap="round" stroke-linejoin="round"/></svg>
<svg style="position:absolute;left:25px;top:991px" width="12" height="15" fill="#222" font-family="Liberation Sans, Noto Sans CJK KR, sans-serif" font-size="12" font-weight="normal"><text x="0.00" y="11.66">점</text></svg>
<div style="position:absolute;left:73px;top:992px;width:13px;height:13px;border-radius:3px;background:#005fb8"></div><svg style="position:absolute;left:73px;top:992px" width="13" height="13" viewBox="0 0 13 13"><path d="M3.200 6.700L5.500 9L9.900 4.300" stroke="#fff" stroke-width="1.200" fill="none" stroke-linecap="round" stroke-linejoin="round"/></svg>
<svg style="position:absolute;left:89px;top:991px" width="24" height="15" fill="#222" font-family="Liberation Sans, Noto Sans CJK KR, sans-serif" font-size="12" font-weight="normal"><text x="0.00" y="11.66">커브</text></svg>
<div style="position:absolute;left:173px;top:992px;width:13px;height:13px;border-radius:3px;background:#005fb8"></div><svg style="position:absolute;left:173px;top:992px" width="13" height="13" viewBox="0 0 13 13"><path d="M3.200 6.700L5.500 9L9.900 4.300" stroke="#fff" stroke-width="1.200" fill="none" stroke-linecap="round" stroke-linejoin="round"/></svg>
<svg style="position:absolute;left:189px;top:991px" width="36" height="15" fill="#222" font-family="Liberation Sans, Noto Sans CJK KR, sans-serif" font-size="12" font-weight="normal"><text x="0.00" y="11.66">서피스</text></svg>
<div style="position:absolute;left:249px;top:992px;width:13px;height:13px;border-radius:3px;background:#005fb8"></div><svg style="position:absolute;left:249px;top:992px" width="13" height="13" viewBox="0 0 13 13"><path d="M3.200 6.700L5.500 9L9.900 4.300" stroke="#fff" stroke-width="1.200" fill="none" stroke-linecap="round" stroke-linejoin="round"/></svg>
<svg style="position:absolute;left:265px;top:991px" width="60" height="15" fill="#222" font-family="Liberation Sans, Noto Sans CJK KR, sans-serif" font-size="12" font-weight="normal"><text x="0.00" y="11.66">폴리서피스</text></svg>
<div style="position:absolute;left:332px;top:992px;width:13px;height:13px;border-radius:3px;background:#005fb8"></div><svg style="position:absolute;left:332px;top:992px" width="13" height="13" viewBox="0 0 13 13"><path d="M3.200 6.700L5.500 9L9.900 4.300" stroke="#fff" stroke-width="1.200" fill="none" stroke-linecap="round" stroke-linejoin="round"/></svg>
<div class="t" style="left:348px;top:991px;color:#222;">SubD</div>
<div style="position:absolute;left:385px;top:992px;width:13px;height:13px;border-radius:3px;background:#005fb8"></div><svg style="position:absolute;left:385px;top:992px" width="13" height="13" viewBox="0 0 13 13"><path d="M3.200 6.700L5.500 9L9.900 4.300" stroke="#fff" stroke-width="1.200" fill="none" stroke-linecap="round" stroke-linejoin="round"/></svg>
<svg style="position:absolute;left:401px;top:991px" width="24" height="15" fill="#222" font-family="Liberation Sans, Noto Sans CJK KR, sans-serif" font-size="12" font-weight="normal"><text x="0.00" y="11.66">메쉬</text></svg>
<div style="position:absolute;left:432px;top:992px;width:13px;height:13px;border-radius:3px;background:#005fb8"></div><svg style="position:absolute;left:432px;top:992px" width="13" height="13" viewBox="0 0 13 13"><path d="M3.200 6.700L5.500 9L9.900 4.300" stroke="#fff" stroke-width="1.200" fill="none" stroke-linecap="round" stroke-linejoin="round"/></svg>
<svg style="position:absolute;left:448px;top:991px" width="24" height="15" fill="#222" font-family="Liberation Sans, Noto Sans CJK KR, sans-serif" font-size="12" font-weight="normal"><text x="0.00" y="11.66">주석</text></svg>
<div style="position:absolute;left:479px;top:992px;width:13px;height:13px;border-radius:3px;background:#005fb8"></div><svg style="position:absolute;left:479px;top:992px" width="13" height="13" viewBox="0 0 13 13"><path d="M3.200 6.700L5.500 9L9.900 4.300" stroke="#fff" stroke-width="1.200" fill="none" stroke-linecap="round" stroke-linejoin="round"/></svg>
<svg style="position:absolute;left:495px;top:991px" width="24" height="15" fill="#222" font-family="Liberation Sans, Noto Sans CJK KR, sans-serif" font-size="12" font-weight="normal"><text x="0.00" y="11.66">조명</text></svg>
<div style="position:absolute;left:526px;top:992px;width:13px;height:13px;border-radius:3px;background:#005fb8"></div><svg style="position:absolute;left:526px;top:992px" width="13" height="13" viewBox="0 0 13 13"><path d="M3.200 6.700L5.500 9L9.900 4.300" stroke="#fff" stroke-width="1.200" fill="none" stroke-linecap="round" stroke-linejoin="round"/></svg>
<svg style="position:absolute;left:542px;top:991px" width="24" height="15" fill="#222" font-family="Liberation Sans, Noto Sans CJK KR, sans-serif" font-size="12" font-weight="normal"><text x="0.00" y="11.66">블록</text></svg>
<div style="position:absolute;left:573px;top:992px;width:13px;height:13px;border-radius:3px;background:#005fb8"></div><svg style="position:absolute;left:573px;top:992px" width="13" height="13" viewBox="0 0 13 13"><path d="M3.200 6.700L5.500 9L9.900 4.300" stroke="#fff" stroke-width="1.200" fill="none" stroke-linecap="round" stroke-linejoin="round"/></svg>
<svg style="position:absolute;left:589px;top:991px" width="36" height="15" fill="#222" font-family="Liberation Sans, Noto Sans CJK KR, sans-serif" font-size="12" font-weight="normal"><text x="0.00" y="11.66">제어점</text></svg>
<div style="position:absolute;left:632px;top:992px;width:13px;height:13px;border-radius:3px;background:#005fb8"></div><svg style="position:absolute;left:632px;top:992px" width="13" height="13" viewBox="0 0 13 13"><path d="M3.200 6.700L5.500 9L9.900 4.300" stroke="#fff" stroke-width="1.200" fill="none" stroke-linecap="round" stroke-linejoin="round"/></svg>
<svg style="position:absolute;left:648px;top:991px" width="36" height="15" fill="#222" font-family="Liberation Sans, Noto Sans CJK KR, sans-serif" font-size="12" font-weight="normal"><text x="0.00" y="11.66">점구름</text></svg>
<div style="position:absolute;left:691px;top:992px;width:13px;height:13px;border-radius:3px;background:#005fb8"></div><svg style="position:absolute;left:691px;top:992px" width="13" height="13" viewBox="0 0 13 13"><path d="M3.200 6.700L5.500 9L9.900 4.300" stroke="#fff" stroke-width="1.200" fill="none" stroke-linecap="round" stroke-linejoin="round"/></svg>
<svg style="position:absolute;left:707px;top:991px" width="24" height="15" fill="#222" font-family="Liberation Sans, Noto Sans CJK KR, sans-serif" font-size="12" font-weight="normal"><text x="0.00" y="11.66">해치</text></svg>
<div style="position:absolute;left:738px;top:992px;width:13px;height:13px;border-radius:3px;background:#005fb8"></div><svg style="position:absolute;left:738px;top:992px" width="13" height="13" viewBox="0 0 13 13"><path d="M3.200 6.700L5.500 9L9.900 4.300" stroke="#fff" stroke-width="1.200" fill="none" stroke-linecap="round" stroke-linejoin="round"/></svg>
<svg style="position:absolute;left:754px;top:991px" width="24" height="15" fill="#222" font-family="Liberation Sans, Noto Sans CJK KR, sans-serif" font-size="12" font-weight="normal"><text x="0.00" y="11.66">기타</text></svg>
<div style="position:absolute;left:787px;top:994px;width:9px;height:9px;border-radius:50%;background:#fafafa;border:1px solid #d0d0d0"></div>
<svg style="position:absolute;left:802px;top:991px" width="48" height="15" fill="#222" font-family="Liberation Sans, Noto Sans CJK KR, sans-serif" font-size="12" font-weight="normal"><text x="0.00" y="11.66">사용안함</text></svg>
<div style="position:absolute;left:857px;top:994px;width:9px;height:9px;border-radius:50%;background:#fafafa;border:1px solid #d0d0d0"></div>
<svg style="position:absolute;left:872px;top:991px" width="52" height="15" fill="#222" font-family="Liberation Sans, Noto Sans CJK KR, sans-serif" font-size="12" font-weight="normal"><text x="0.00" y="11.66">하위</text><text x="27.95" y="11.66">개체</text></svg>
<div style="position:absolute;left:0;top:1012px;width:1919px;height:1px;background:#b9c4dd"></div>
<div style="position:absolute;left:658px;top:1013px;width:298px;height:19px;background:#d3dbf1"></div>
<div style="position:absolute;left:60px;top:1013px;width:1px;height:19px;background:#b9c4dd"></div>
<div style="position:absolute;left:148px;top:1013px;width:1px;height:19px;background:#b9c4dd"></div>
<div style="position:absolute;left:236px;top:1013px;width:1px;height:19px;background:#b9c4dd"></div>
<div style="position:absolute;left:324px;top:1013px;width:1px;height:19px;background:#b9c4dd"></div>
<div style="position:absolute;left:412px;top:1013px;width:1px;height:19px;background:#b9c4dd"></div>
<div style="position:absolute;left:580px;top:1013px;width:1px;height:19px;background:#b9c4dd"></div>
<div style="position:absolute;left:658px;top:1013px;width:1px;height:19px;background:#b9c4dd"></div>
<div style="position:absolute;left:721px;top:1013px;width:1px;height:19px;background:#b9c4dd"></div>
<div style="position:absolute;left:783px;top:1013px;width:1px;height:19px;background:#b9c4dd"></div>
<div style="position:absolute;left:844px;top:1013px;width:1px;height:19px;background:#b9c4dd"></div>
<div style="position:absolute;left:918px;top:1013px;width:1px;height:19px;background:#b9c4dd"></div>
<div style="position:absolute;left:956px;top:1013px;width:1px;height:19px;background:#b9c4dd"></div>
<div style="position:absolute;left:1046px;top:1013px;width:1px;height:19px;background:#b9c4dd"></div>
<div style="position:absolute;left:1084px;top:1013px;width:1px;height:19px;background:#b9c4dd"></div>
<div style="position:absolute;left:1912px;top:1013px;width:1px;height:19px;background:#b9c4dd"></div>
<svg style="position:absolute;left:7px;top:1016px" width="48" height="15" fill="#222" font-family="Liberation Sans, Noto Sans CJK KR, sans-serif" font-size="12" font-weight="normal"><text x="0.00" y="11.66">구성평면</text></svg>
<div class="t" style="left:95px;top:1016px;color:#222;">x 0</div>
<div class="t" style="left:183px;top:1016px;color:#222;">y 0</div>
<div class="t" style="left:271px;top:1016px;color:#222;">z 0</div>
<svg style="position:absolute;left:346px;top:1016px" width="48" height="15" fill="#222" font-family="Liberation Sans, Noto Sans CJK KR, sans-serif" font-size="12" font-weight="normal"><text x="0.00" y="11.66">밀리미터</text></svg>
<svg style="position:absolute;left:432px;top:1016px" width="36" height="15" fill="#222" font-family="Liberation Sans, Noto Sans CJK KR, sans-serif" font-size="12" font-weight="normal"><text x="0.00" y="11.66">기본값</text></svg>
<svg style="position:absolute;left:588px;top:1016px" width="64" height="15" fill="#222" font-family="Liberation Sans, Noto Sans CJK KR, sans-serif" font-size="12" font-weight="normal"><text x="0.00" y="11.66">그리드</text><text x="39.93" y="11.66">스냅</text></svg>
<svg style="position:absolute;left:666px;top:1016px" width="48" height="15" fill="#222" font-family="Liberation Sans, Noto Sans CJK KR, sans-serif" font-size="12" font-weight="bold"><text x="0.00" y="11.66">직교모드</text></svg>
<svg style="position:absolute;left:728px;top:1016px" width="48" height="15" fill="#222" font-family="Liberation Sans, Noto Sans CJK KR, sans-serif" font-size="12" font-weight="bold"><text x="0.00" y="11.66">평면모드</text></svg>
<svg style="position:absolute;left:790px;top:1016px" width="48" height="15" fill="#222" font-family="Liberation Sans, Noto Sans CJK KR, sans-serif" font-size="12" font-weight="bold"><text x="0.00" y="11.66">개체스냅</text></svg>
<div class="t" style="left:848px;top:1016px;color:#222;font-weight:bold;">SmartTrack</div>
<svg style="position:absolute;left:927px;top:1016px" width="24" height="15" fill="#222" font-family="Liberation Sans, Noto Sans CJK KR, sans-serif" font-size="12" font-weight="bold"><text x="0.00" y="11.66">검볼</text></svg>
<svg style="position:absolute;left:964px;top:1016px" width="76" height="15" fill="#222" font-family="Liberation Sans, Noto Sans CJK KR, sans-serif" font-size="12" font-weight="normal"><text x="0.00" y="11.66">히스토리</text><text x="51.91" y="11.66">기록</text></svg>
<svg style="position:absolute;left:1054px;top:1016px" width="24" height="15" fill="#222" font-family="Liberation Sans, Noto Sans CJK KR, sans-serif" font-size="12" font-weight="normal"><text x="0.00" y="11.66">필터</text></svg>
<svg style="position:absolute;left:1087px;top:1016px" width="195" height="15" fill="#222" font-family="Liberation Sans, Noto Sans CJK KR, sans-serif" font-size="12" font-weight="normal"><text x="0.00" y="11.66">사용</text><text x="27.95" y="11.66">가능한</text><text x="67.88" y="11.66">실제</text><text x="95.84" y="11.66">메모리</text><text x="131.77" y="10.660">:</text><text x="139.10" y="10.660">14376</text><text x="176.47" y="10.660">MB</text></svg>
<div style="position:absolute;left:416px;top:1016px;width:14px;height:14px;background:#000"></div>
<!-- taskbar -->
<div style="position:absolute;left:0;top:1032px;width:1919px;height:47px;background:linear-gradient(90deg,#e4e4e3 0%,#e4e3e3 38%,#e3e2e8 47%,#e6e5df 59%,#e5e4df 78%,#e2e3e5 100%)"></div>
<div style="position:absolute;left:0;top:1032px;width:1919px;height:1px;background:#bdbdbd"></div>
<svg style="position:absolute;left:21px;top:1045px" width="23" height="23" viewBox="0 0 23 23"><defs><linearGradient id="wg" x1="0" y1="0" x2="1" y2="1"><stop offset="0" stop-color="#5cc5f4"/><stop offset="1" stop-color="#0a6fd0"/></linearGradient></defs><rect x="0" y="0" width="11" height="11" rx="1" fill="url(#wg)"/><rect x="12" y="0" width="11" height="11" rx="1" fill="url(#wg)"/><rect x="0" y="12" width="11" height="11" rx="1" fill="url(#wg)"/><rect x="12" y="12" width="11" height="11" rx="1" fill="url(#wg)"/></svg>
<div style="position:absolute;left:58px;top:1041px;width:216px;height:29px;border-radius:16px;background:#f4f4f4;border:1px solid #d6d6d6"></div>
<svg style="position:absolute;left:68px;top:1047px" width="17" height="17" viewBox="0 0 17 17" fill="none" stroke="#222" stroke-width="1.600"><circle cx="7" cy="7" r="5"/><path d="M10.800 10.800L15 15" stroke-linecap="round"/></svg>
<svg style="position:absolute;left:94px;top:1047px" width="28" height="18" fill="#666" font-family="Liberation Sans, Noto Sans CJK KR, sans-serif" font-size="14" font-weight="normal"><text x="0.00" y="13.85">검색</text></svg>
<div style="position:absolute;left:295px;top:1045px;width:18px;height:15px;border-radius:2px;background:linear-gradient(135deg,#fff,#d8d8d8)"></div>
<div style="position:absolute;left:289px;top:1051px;width:18px;height:16px;border-radius:2px;background:linear-gradient(180deg,#4a4a4a,#111)"></div>
<div style="position:absolute;left:295px;top:1051px;width:12px;height:9px;background:linear-gradient(135deg,#cfcfcf,#9d9d9d)"></div>
<div style="position:absolute;left:335px;top:1046px;width:20px;height:19px;background:#555;border:1px solid #d9c7a2;box-sizing:border-box"></div>
<div style="position:absolute;left:337.0px;top:1048px;width:3.200px;height:9px;background:#e53935"></div>
<div style="position:absolute;left:340.2px;top:1048px;width:3.200px;height:9px;background:#fb8c00"></div>
<div style="position:absolute;left:343.4px;top:1048px;width:3.200px;height:9px;background:#fdd835"></div>
<div style="position:absolute;left:346.6px;top:1048px;width:3.200px;height:9px;background:#43a047"></div>
<div style="position:absolute;left:349.8px;top:1048px;width:3.200px;height:9px;background:#1e88e5"></div>
<div style="position:absolute;left:338px;top:1060px;width:3px;height:3px;background:#e8e0d0"></div>
<div style="position:absolute;left:343px;top:1060px;width:3px;height:3px;background:#e8e0d0"></div>
<div style="position:absolute;left:348px;top:1060px;width:3px;height:3px;background:#e8e0d0"></div>
<div style="position:absolute;left:377px;top:1044px;width:24px;height:24px;border-radius:4px;background:#fae100"></div>
<svg style="position:absolute;left:377px;top:1044px" width="24" height="24" viewBox="0 0 24 24"><ellipse cx="12" cy="11" rx="9" ry="7" fill="#3c1e1e"/><path d="M7 16L6.500 21L11 17Z" fill="#3c1e1e"/><text x="12" y="13.200" font-family="Liberation Sans" font-size="5.500" font-weight="bold" fill="#fae100" text-anchor="middle">TALK</text></svg>
<div style="position:absolute;left:386.0px;top:1072px;width:6px;height:3px;border-radius:2px;background:#7d7d7d"></div>
<div style="position:absolute;left:421px;top:1047px;width:24px;height:18px;background:linear-gradient(180deg,#9bdcf7,#5ab8ea);border:1px solid #2f9ee0;box-sizing:border-box;border-radius:1px"></div>
<svg style="position:absolute;left:421px;top:1047px" width="24" height="18" viewBox="0 0 24 18"><circle cx="8" cy="8" r="5" fill="#1976d2"/><path d="M8 8V3A5 5 0 0 1 13 8Z" fill="#f57c00"/><rect x="15" y="4" width="6" height="2" fill="#e8f6ff"/><rect x="15" y="8" width="6" height="2" fill="#e8f6ff"/><rect x="3" y="14" width="7" height="1.500" fill="#f57c00"/><rect x="12" y="14" width="9" height="1.500" fill="#1976d2"/></svg>
<svg style="position:absolute;left:465px;top:1045px" width="24" height="22" viewBox="0 0 24 22"><path d="M0 2.500Q0 1 1.500 1H8L10.500 3.500H22.500Q24 3.500 24 5V8H0Z" fill="#e8a317"/><rect x="0" y="4.500" width="24" height="16.500" rx="1.500" fill="#fcc940"/><rect x="0" y="12" width="24" height="9" rx="1.500" fill="#f8b52c" opacity=".6"/><rect x="4.500" y="14.500" width="15" height="6.500" rx="1.500" fill="#1a7fd4"/><rect x="8" y="16.500" width="8" height="1.500" rx=".7" fill="#0d5ea8"/></svg>
<div style="position:absolute;left:474.0px;top:1072px;width:6px;height:3px;border-radius:2px;background:#7d7d7d"></div>
<div style="position:absolute;left:510px;top:1045px;width:22px;height:22px;border-radius:2px;background:linear-gradient(180deg,#3a3a3a,#222)"></div>
<svg style="position:absolute;left:510px;top:1045px" width="22" height="22" viewBox="0 0 22 22"><path d="M21 11V21H11Z" fill="#f9d71c"/></svg>
<div style="position:absolute;left:518.0px;top:1072px;width:6px;height:3px;border-radius:2px;background:#7d7d7d"></div>
<div style="position:absolute;left:553px;top:1044px;width:24px;height:24px;border-radius:4px;background:#4a86ee"></div>
<div style="position:absolute;left:558px;top:1049px;width:15px;height:3px;background:#fff"></div>
<div style="position:absolute;left:558px;top:1055px;width:15px;height:3px;background:#fff"></div>
<div style="position:absolute;left:558px;top:1061px;width:10px;height:3px;background:#fff"></div>
<svg style="position:absolute;left:597px;top:1044px" width="24" height="24" viewBox="-12 -12 24 24"><circle r="12" fill="#fff"/><path d="M0 0L-10.390 -6A12 12 0 0 1 10.390 -6Z" fill="#ea4335"/><path d="M0 0L10.390 -6A12 12 0 0 1 0 12Z" fill="#fbc116"/><path d="M0 0L0 12A12 12 0 0 1 -10.390 -6Z" fill="#31a350"/><path d="M-10.390 -6L-4.700 3.800L0 0Z" fill="#31a350"/><path d="M10.390 -6H-1L0 0Z" fill="#ea4335"/><path d="M0 12L5.200 2.500L0 0Z" fill="#fbc116"/><circle r="5.600" fill="#fff"/><circle r="4.500" fill="#4285f4"/></svg>
<div style="position:absolute;left:610px;top:1039px;width:16px;height:16px;border-radius:50%;background:#0b3c49"></div>
<div style="position:absolute;left:606.0px;top:1072px;width:6px;height:3px;border-radius:2px;background:#7d7d7d"></div>
<svg style="position:absolute;left:641px;top:1044px" width="24" height="24" viewBox="-12 -12 24 24"><circle r="12" fill="#fff"/><path d="M0 0L-10.390 -6A12 12 0 0 1 10.390 -6Z" fill="#ea4335"/><path d="M0 0L10.390 -6A12 12 0 0 1 0 12Z" fill="#fbc116"/><path d="M0 0L0 12A12 12 0 0 1 -10.390 -6Z" fill="#31a350"/><path d="M-10.390 -6L-4.700 3.800L0 0Z" fill="#31a350"/><path d="M10.390 -6H-1L0 0Z" fill="#ea4335"/><path d="M0 12L5.200 2.500L0 0Z" fill="#fbc116"/><circle r="5.600" fill="#fff"/><circle r="4.500" fill="#4285f4"/></svg>
<div style="position:absolute;left:654px;top:1039px;width:16px;height:16px;border-radius:50%;background:#689f38"></div>
<div class="t" style="left:659px;top:1040px;color:#fff;font-size:9px;font-weight:bold;line-height:14px;">Y</div>
<div style="position:absolute;left:650.0px;top:1072px;width:6px;height:3px;border-radius:2px;background:#7d7d7d"></div>
<svg style="position:absolute;left:685px;top:1044px" width="24" height="24" viewBox="-12 -12 24 24"><circle r="12" fill="#fff"/><path d="M0 0L-10.390 -6A12 12 0 0 1 10.390 -6Z" fill="#ea4335"/><path d="M0 0L10.390 -6A12 12 0 0 1 0 12Z" fill="#fbc116"/><path d="M0 0L0 12A12 12 0 0 1 -10.390 -6Z" fill="#31a350"/><path d="M-10.390 -6L-4.700 3.800L0 0Z" fill="#31a350"/><path d="M10.390 -6H-1L0 0Z" fill="#ea4335"/><path d="M0 12L5.200 2.500L0 0Z" fill="#fbc116"/><circle r="5.600" fill="#fff"/><circle r="4.500" fill="#4285f4"/></svg>
<div style="position:absolute;left:698px;top:1039px;width:16px;height:16px;border-radius:50%;background:#ef6c00"></div>
<svg style="position:absolute;left:699.5px;top:1040px" width="12" height="14" fill="#fff" font-family="Liberation Sans, Noto Sans CJK KR, sans-serif" font-size="6" font-weight="bold"><text x="0.00" y="9.08">영우</text></svg>
<div style="position:absolute;left:694.0px;top:1072px;width:6px;height:3px;border-radius:2px;background:#7d7d7d"></div>
<svg style="position:absolute;left:610px;top:1039px" width="16" height="16" viewBox="0 0 16 16" fill="none" stroke="#fff" stroke-width="1.200"><circle cx="8" cy="8" r="6"/><circle cx="8" cy="6.500" r="2"/><path d="M4.500 12Q8 8.500 11.500 12"/></svg>
<div style="position:absolute;left:729px;top:1044px;width:24px;height:24px;border-radius:6px;background:linear-gradient(180deg,#fb5c74,#f0223c)"></div>
<svg style="position:absolute;left:729px;top:1044px" width="24" height="24" viewBox="0 0 24 24"><path d="M9 6.500L17 4.500V15.500" fill="none" stroke="#fff" stroke-width="1.800"/><path d="M9 6.500V17.500" stroke="#fff" stroke-width="1.800"/><path d="M9 6.500L17 4.500V7.500L9 9.500Z" fill="#fff"/><ellipse cx="7" cy="17.500" rx="2.800" ry="2.200" fill="#fff"/><ellipse cx="15" cy="15.500" rx="2.800" ry="2.200" fill="#fff"/></svg>
<div style="position:absolute;left:738.0px;top:1072px;width:6px;height:3px;border-radius:2px;background:#7d7d7d"></div>
<div style="position:absolute;left:773px;top:1044px;width:24px;height:24px;border-radius:6px;background:#fff"></div>
<svg style="position:absolute;left:773px;top:1044px" width="24" height="24" viewBox="0 0 24 24" fill="none"><path d="M5 6.500H15M5 10.500H13" stroke="#29b6d8" stroke-width="1.600"/><path d="M5 14.500Q9 21.500 14 16" stroke="#29b6d8" stroke-width="1.600"/><path d="M19.500 5L15.500 15" stroke="#111" stroke-width="2.600" stroke-linecap="round"/></svg>
<div style="position:absolute;left:810px;top:1037px;width:38px;height:38px;border-radius:4px;background:#f4f4f2;box-shadow:0 0 0 1px rgba(0,0,0,0.04)"></div>
<svg style="position:absolute;left:817px;top:1044px;overflow:hidden" width="24" height="24" viewBox="0 0 24 24"><rect width="24" height="24" rx=".6" fill="#000"/><path d="M0 0L7 .6L9.600 2.500L11 7.600L13.200 11L15.200 12L17.600 10.800L16.400 13L15.800 14.700L18 14.200L24 10.600V12.400L20 16.500L17.700 19.500L16.600 21.500L14.500 23L12 21L9 18.500L5.500 17L4 15.500L2 13L0 11.500Z" fill="#fff"/><path d="M4.300 .3Q4.800 3.500 3.400 6.500T1.700 9.400" fill="none" stroke="#000" stroke-width="1.900" stroke-linecap="round"/><path d="M4.600 11.800L11 8" fill="none" stroke="#000" stroke-width=".6"/><path d="M4.300 11.300L5.900 10.800L6.600 13L9.500 15.800L12.900 14L10.200 17.300L8 16.300L5.600 16.900Z" fill="#000"/><path d="M16.800 1.400H22.600Q19.500 5 18.700 9.500" fill="none" stroke="#fff" stroke-width="1.300"/></svg>
<div style="position:absolute;left:821px;top:1072px;width:16px;height:3px;border-radius:2px;background:#0078d4"></div>
<svg style="position:absolute;left:1644px;top:1051px" width="12" height="8" viewBox="0 0 12 8" fill="none" stroke="#222" stroke-width="1.300"><path d="M1 6.500L6 1.500L11 6.500"/></svg>
<div style="position:absolute;left:1674px;top:1048px;width:16px;height:16px;border-radius:2px;background:#fae100"></div>
<svg style="position:absolute;left:1674px;top:1048px" width="16" height="16" viewBox="0 0 16 16"><ellipse cx="8" cy="7.500" rx="5.500" ry="4.200" fill="#3c1e1e"/><path d="M5 10.500L4.500 13.500L8 11Z" fill="#3c1e1e"/></svg>
<div class="t" style="left:1707px;top:1045px;color:#111;font-size:19px;line-height:22px;">A</div>
<svg style="position:absolute;left:1744px;top:1046px" width="15" height="20" fill="#111" font-family="Liberation Sans, Noto Sans CJK KR, sans-serif" font-size="15" font-weight="normal"><text x="0.00" y="15.20">한</text></svg>
<svg style="position:absolute;left:1782px;top:1047px" width="18" height="18" viewBox="0 0 18 18" fill="none" stroke="#222" stroke-width="1.200"><path d="M11 3.500H2.500V12.500H11"/><path d="M4.500 15.500H10M7 12.500V15.500"/><rect x="12" y="1.500" width="3.500" height="6" rx="1"/><path d="M13.700 7.500V15.500H11"/></svg>
<svg style="position:absolute;left:1806px;top:1048px" width="20" height="16" viewBox="0 0 20 16" fill="none" stroke="#222" stroke-width="1.100"><path d="M1.500 5.500H4L7.500 2.500V13.500L4 10.500H1.500Z"/><path d="M9.500 5.500Q11 8 9.500 10.500"/><path d="M11.500 3.500Q14.500 8 11.500 12.500" stroke="#999"/><path d="M13.500 2Q17.500 8 13.500 14" stroke="#bbb"/></svg>
<svg style="position:absolute;left:1849.7px;top:1040px" width="52" height="15" fill="#222" font-family="Liberation Sans, Noto Sans CJK KR, sans-serif" font-size="12" font-weight="normal"><text x="0.00" y="11.66">오후</text><text x="27.95" y="10.660">6:23</text></svg>
<div class="t" style="left:1839.6px;top:1056px;color:#222;">2026-04-16</div>
<!-- dialog -->
<div style="position:absolute;left:653px;top:307px;width:532px;height:375px;border-radius:8px;background:#f0f0f0;box-shadow:0 0 0 1px rgba(0,0,0,0.16),0 14px 30px rgba(0,0,0,0.26),0 0 18px rgba(0,0,0,0.16);overflow:hidden"><div style="position:absolute;left:0;top:0;width:532px;height:29px;background:linear-gradient(90deg,#f4f1ec,#f9f3ec)"></div></div>
<svg style="position:absolute;left:662px;top:314px" width="359" height="15" fill="#1a1a1a" font-family="Liberation Sans, Noto Sans CJK KR, sans-serif" font-size="12" font-weight="normal"><text x="0.00" y="11.66">플러그인의</text><text x="63.10" y="11.66">설치가</text><text x="102.24" y="11.66">완료되었습니다</text><text x="186.08" y="10.660">.</text><text x="192.62" y="11.66">계속하려면</text><text x="255.72" y="11.66">닫기를</text><text x="294.86" y="11.66">누르십시오</text><text x="354.75" y="10.660">.</text></svg>
<svg style="position:absolute;left:665px;top:350px" width="363" height="15" fill="#000" font-family="Liberation Sans, Noto Sans CJK KR, sans-serif" font-size="12" font-weight="normal"><text x="0.00" y="11.66">플러그인의</text><text x="63.89" y="11.66">설치가</text><text x="103.82" y="11.66">완료되었습니다</text><text x="187.67" y="10.660">.</text><text x="195.00" y="11.66">계속하려면</text><text x="258.89" y="11.66">닫기를</text><text x="298.82" y="11.66">누르십시오</text><text x="358.71" y="10.660">.</text></svg>
<div style="position:absolute;left:665px;top:388px;width:506px;height:244px;background:#fff;border:1px solid #7a8087"></div>
<div style="position:absolute;left:685px;top:390px;width:486px;height:19px;background:#0078d7"></div>
<svg style="position:absolute;left:669px;top:392px" width="15" height="15" viewBox="0 0 15 15"><path d="M2 2.500L12.500 13M12.500 2.500L2 13" stroke="#2e2a5e" stroke-width="1.900" fill="none"/></svg>
<svg style="position:absolute;left:691px;top:393px" width="172" height="15" fill="#fff" font-family="Liberation Sans, Noto Sans CJK KR, sans-serif" font-size="12" font-weight="normal"><text x="0.00" y="11.66">로드</text><text x="27.95" y="11.66">중</text><text x="43.93" y="11.66">오류</text><text x="71.88" y="11.66">발생</text><text x="99.83" y="10.660">-</text><text x="107.82" y="10.660">D5Conv.rhp</text></svg>
<div style="position:absolute;left:992px;top:644px;width:84px;height:22px;background:#fdfdfd;border:1px solid #d0d0d0;border-bottom-color:#bdbdbd;border-radius:4px"></div>
<svg style="position:absolute;left:1008px;top:649px" width="53" height="15" fill="#000" font-family="Liberation Sans, Noto Sans CJK KR, sans-serif" font-size="12" font-weight="normal"><text x="0.00" y="11.66">자세히</text><text x="35.94" y="10.660">(D)</text></svg>
<div style="position:absolute;left:1086px;top:644px;width:84px;height:22px;background:#fdfdfd;border:1px solid #d0d0d0;border-bottom-color:#bdbdbd;border-radius:4px"></div>
<svg style="position:absolute;left:1109px;top:649px" width="41" height="15" fill="#000" font-family="Liberation Sans, Noto Sans CJK KR, sans-serif" font-size="12" font-weight="normal"><text x="0.00" y="11.66">닫기</text><text x="23.96" y="10.660">(C)</text></svg>
</body></html>
